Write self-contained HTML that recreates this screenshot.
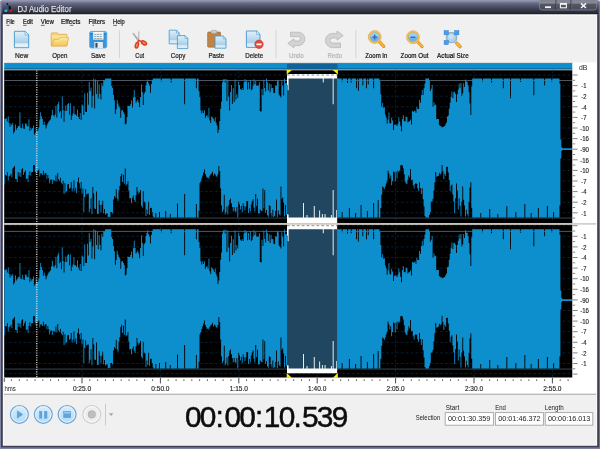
<!DOCTYPE html>
<html><head><meta charset="utf-8"><title>DJ Audio Editor</title>
<style>html,body{margin:0;padding:0;background:#f0f0f0;overflow:hidden}svg{display:block;will-change:transform}text{font-family:"Liberation Sans", sans-serif;paint-order:stroke;stroke-linejoin:round}</style>
</head><body>
<svg width="600" height="449" viewBox="0 0 600 449">
<defs>
<linearGradient id="tg" x1="0" y1="0" x2="0" y2="1">
<stop offset="0" stop-color="#9a9eb9"/><stop offset="0.1" stop-color="#8589a3"/><stop offset="0.2" stop-color="#6b6f88"/><stop offset="0.4" stop-color="#52566b"/><stop offset="0.6" stop-color="#3f4254"/><stop offset="0.85" stop-color="#2a2c39"/><stop offset="0.96" stop-color="#1c1d26"/><stop offset="1" stop-color="#101016"/>
</linearGradient>
<linearGradient id="docg" x1="0" y1="0" x2="0" y2="1"><stop offset="0" stop-color="#e2f0f9"/><stop offset="0.72" stop-color="#a6cfea"/><stop offset="0.76" stop-color="#d2e8f5"/><stop offset="1" stop-color="#e2f1fa"/></linearGradient>
<linearGradient id="capg" x1="0" y1="0" x2="0" y2="1"><stop offset="0" stop-color="#7d7f8d"/><stop offset="0.3" stop-color="#8a8c98"/><stop offset="0.42" stop-color="#555764"/><stop offset="1" stop-color="#474957"/></linearGradient>
<linearGradient id="btng" x1="0" y1="0" x2="0" y2="1"><stop offset="0" stop-color="#d9edfb"/><stop offset="1" stop-color="#b5daf5"/></linearGradient>
<linearGradient id="fold" x1="0" y1="0" x2="0" y2="1"><stop offset="0" stop-color="#fce695"/><stop offset="1" stop-color="#f5c659"/></linearGradient>
<clipPath id="selclip"><rect x="287.0" y="73.9" width="50.4" height="299.4"/></clipPath>
<clipPath id="waveclip"><rect x="4.2" y="70" width="568.3" height="308"/></clipPath>
</defs>
<rect x="0" y="0" width="600" height="449" fill="#f0f0f0"/>
<rect x="0" y="0" width="600" height="14.6" fill="url(#tg)"/>
<path d="M0 0H2.2A2.2 2.2 0 0 0 0 2.2Z" fill="#fff"/>
<path d="M600 0H597.8A2.2 2.2 0 0 1 600 2.2Z" fill="#fff"/>
<g><rect x="6.5" y="3" width="1.5" height="8" fill="#175a9c"/><path d="M6.8 3L8 3.2L8.4 5.2L7 4.6Z" fill="#0c0c10"/><ellipse cx="5.9" cy="10.7" rx="1.5" ry="1.3" fill="#30b2f4"/><path d="M8.6 5.6L10.6 6.2L10.8 10L9 10.2Z" fill="#0a0a0e"/><path d="M9.2 9.4L12.9 9L12 11.4L9.4 12Z" fill="#c8141e"/></g>
<text x="17.6" y="11.5" font-size="8.9" fill="#e4e5ee" stroke="#e4e5ee" stroke-width="0.25" style="filter:drop-shadow(0.5px 0.5px 0 #08080c)" textLength="53.9" lengthAdjust="spacingAndGlyphs">DJ Audio Editor</text>
<path d="M539.5 0V7.5A2.5 2.5 0 0 0 542 10H594A2.5 2.5 0 0 0 596.5 7.5V0Z" fill="url(#capg)" stroke="#8a8c9a" stroke-width="0.7"/>
<path d="M556 0V10M571 0V10" stroke="#2a2b36" stroke-width="0.8"/>
<path d="M556.8 0V9.6M571.8 0V9.6" stroke="#80838f" stroke-width="0.5"/>
<rect x="545" y="6.3" width="6" height="1.8" fill="#f4f4f6"/>
<rect x="560.4" y="3.6" width="6" height="4.2" fill="none" stroke="#f4f4f6" stroke-width="1.1"/><rect x="560" y="3.2" width="6.8" height="1.6" fill="#f4f4f6"/>
<path d="M581 3.4L586 8M586 3.4L581 8" stroke="#f4f4f6" stroke-width="1.5"/>
<rect x="3.6" y="14.6" width="593" height="12" fill="#f0f0f0"/>
<rect x="3.6" y="14.6" width="593" height="1.2" fill="#fbfbfb"/>
<text x="6.3" y="24" font-size="7.6" fill="#111" stroke="#111" stroke-width="0.22" textLength="8.4" lengthAdjust="spacingAndGlyphs">File</text>
<text x="23.0" y="24" font-size="7.6" fill="#111" stroke="#111" stroke-width="0.22" textLength="9.8" lengthAdjust="spacingAndGlyphs">Edit</text>
<text x="40.8" y="24" font-size="7.6" fill="#111" stroke="#111" stroke-width="0.22" textLength="13.0" lengthAdjust="spacingAndGlyphs">View</text>
<text x="61.0" y="24" font-size="7.6" fill="#111" stroke="#111" stroke-width="0.22" textLength="19.6" lengthAdjust="spacingAndGlyphs">Effects</text>
<text x="88.6" y="24" font-size="7.6" fill="#111" stroke="#111" stroke-width="0.22" textLength="16.4" lengthAdjust="spacingAndGlyphs">Filters</text>
<text x="113.0" y="24" font-size="7.6" fill="#111" stroke="#111" stroke-width="0.22" textLength="11.8" lengthAdjust="spacingAndGlyphs">Help</text>
<rect x="6.4" y="24.9" width="3.0" height="0.7" fill="#333"/>
<rect x="23.1" y="24.9" width="3.5" height="0.7" fill="#333"/>
<rect x="40.9" y="24.9" width="3.7" height="0.7" fill="#333"/>
<rect x="70.2" y="24.9" width="3.0" height="0.7" fill="#333"/>
<rect x="92.6" y="24.9" width="1.4" height="0.7" fill="#333"/>
<rect x="113.1" y="24.9" width="3.9" height="0.7" fill="#333"/>
<rect x="3.6" y="26.6" width="593" height="35.4" fill="#f0f0f0"/>
<rect x="3.6" y="61.8" width="593" height="1" fill="#fbfbfb"/>
<rect x="119.1" y="30.3" width="0.9" height="27.6" fill="#d2d2d2"/>
<rect x="275.6" y="30.3" width="0.9" height="27.6" fill="#d2d2d2"/>
<rect x="355.4" y="30.3" width="0.9" height="27.6" fill="#d2d2d2"/>
<text x="15.0" y="57.8" font-size="7.4" fill="#1a1a1a" stroke="#1a1a1a" stroke-width="0.22" textLength="13.2" lengthAdjust="spacingAndGlyphs">New</text>
<text x="52.3" y="57.8" font-size="7.4" fill="#1a1a1a" stroke="#1a1a1a" stroke-width="0.22" textLength="15.1" lengthAdjust="spacingAndGlyphs">Open</text>
<text x="91.0" y="57.8" font-size="7.4" fill="#1a1a1a" stroke="#1a1a1a" stroke-width="0.22" textLength="14.4" lengthAdjust="spacingAndGlyphs">Save</text>
<text x="135.3" y="57.8" font-size="7.4" fill="#1a1a1a" stroke="#1a1a1a" stroke-width="0.22" textLength="8.8" lengthAdjust="spacingAndGlyphs">Cut</text>
<text x="170.7" y="57.8" font-size="7.4" fill="#1a1a1a" stroke="#1a1a1a" stroke-width="0.22" textLength="14.7" lengthAdjust="spacingAndGlyphs">Copy</text>
<text x="208.4" y="57.8" font-size="7.4" fill="#1a1a1a" stroke="#1a1a1a" stroke-width="0.22" textLength="15.7" lengthAdjust="spacingAndGlyphs">Paste</text>
<text x="245.3" y="57.8" font-size="7.4" fill="#1a1a1a" stroke="#1a1a1a" stroke-width="0.22" textLength="17.8" lengthAdjust="spacingAndGlyphs">Delete</text>
<text x="289.0" y="57.8" font-size="7.4" fill="#b4b4b4" stroke="#b4b4b4" stroke-width="0.22" textLength="14.7" lengthAdjust="spacingAndGlyphs">Undo</text>
<text x="327.4" y="57.8" font-size="7.4" fill="#b4b4b4" stroke="#b4b4b4" stroke-width="0.22" textLength="14.7" lengthAdjust="spacingAndGlyphs">Redo</text>
<text x="365.3" y="57.8" font-size="7.4" fill="#111" stroke="#111" stroke-width="0.22" textLength="22.1" lengthAdjust="spacingAndGlyphs">Zoom In</text>
<text x="400.6" y="57.8" font-size="7.4" fill="#111" stroke="#111" stroke-width="0.22" textLength="27.8" lengthAdjust="spacingAndGlyphs">Zoom Out</text>
<text x="437.0" y="57.8" font-size="7.4" fill="#111" stroke="#111" stroke-width="0.22" textLength="31.8" lengthAdjust="spacingAndGlyphs">Actual Size</text>
<path d="M14.4 31.3H25.1L28.7 34.9V47.7H14.4Z" fill="url(#docg)" stroke="#4496cd" stroke-width="0.9" stroke-linejoin="round"/><path d="M25.1 31.3V34.9H28.7Z" fill="#fff" stroke="#4496cd" stroke-width="0.6" stroke-linejoin="round"/>
<rect x="15.2" y="43.6" width="12.6" height="3.4" fill="#e3f1fa" opacity="0.9"/>
<path d="M51.2 33.7Q51.2 32.9 52 32.9H57.3L58.6 34.3H66.2Q67 34.3 67 35.1V45.8H51.2Z" fill="#f8d874" stroke="#dca43a" stroke-width="0.7" stroke-linejoin="round"/>
<path d="M52 35.4H66.2V38H52Z" fill="#fbe7a2" opacity="0.8"/>
<path d="M51.5 46L54 39.6H58.7L59.8 37.8H68.7L66.6 46Z" fill="url(#fold)" stroke="#dfa83c" stroke-width="0.7" stroke-linejoin="round"/>
<path d="M54.6 40.3H59.1L60.2 38.5H67.8" stroke="#fdf1b6" stroke-width="0.6" fill="none"/>
<rect x="89.6" y="31.4" width="17.2" height="16.6" rx="1.7" fill="#3494de" stroke="#5aaae6" stroke-width="0.8"/>
<rect x="90.3" y="32" width="15.8" height="1.2" rx="0.6" fill="#7cc0f0" opacity="0.8"/>
<rect x="93.2" y="32" width="10.3" height="7.6" fill="#f7fafc"/>
<path d="M94.2 34.3H102.4M94.2 36.4H102.4M94.2 38.4H102.4" stroke="#6f8797" stroke-width="0.8" stroke-dasharray="2.2 0.5"/>
<rect x="90.8" y="33" width="1" height="1.6" fill="#1d5fa0"/><rect x="104.6" y="33" width="1" height="1.6" fill="#1d5fa0"/>
<rect x="94.3" y="42" width="8.6" height="6.2" fill="#e6ebef"/>
<rect x="95.4" y="42.9" width="2.1" height="4.7" fill="#33475a"/>
<path d="M132.3 33.2L133.5 32.7L139.8 40.4L138 41.6Z" fill="#a4a8ad"/>
<path d="M138.3 30.5L139.5 32.2L139.4 41L137.5 40.9Z" fill="#bfc3c7"/>
<path d="M138.6 40.5L137.4 42.8M138.9 40.5L141.8 41.6" stroke="#dc3f1b" stroke-width="1.5" stroke-linecap="round"/>
<ellipse cx="136.9" cy="45.2" rx="1.5" ry="2.8" fill="#ee9278" stroke="#dc3f1b" stroke-width="1.5" transform="rotate(14 136.9 45.2)"/>
<ellipse cx="144" cy="42.9" rx="2.8" ry="1.6" fill="#ee9278" stroke="#dc3f1b" stroke-width="1.5" transform="rotate(32 144 42.9)"/>
<circle cx="138.5" cy="40.3" r="0.7" fill="#e4502c"/>
<path d="M169.2 30.2H176.4L179.2 33.0V43.8H169.2Z" fill="url(#docg)" stroke="#4496cd" stroke-width="0.8" stroke-linejoin="round"/><path d="M176.4 30.2V33.0H179.2Z" fill="#fff" stroke="#4496cd" stroke-width="0.6" stroke-linejoin="round"/>
<path d="M177.4 35.6H185.0L187.8 38.4V48.6H177.4Z" fill="url(#docg)" stroke="#4496cd" stroke-width="0.8" stroke-linejoin="round"/><path d="M185.0 35.6V38.4H187.8Z" fill="#fff" stroke="#4496cd" stroke-width="0.6" stroke-linejoin="round"/>
<rect x="207.6" y="32" width="13" height="15.2" rx="1" fill="#bd8444" stroke="#9c6a33" stroke-width="0.6"/>
<rect x="211.2" y="30.4" width="5.6" height="3" rx="0.8" fill="#c9cdd2" stroke="#8d9298" stroke-width="0.5"/>
<path d="M215.0 36.0H223.2L226.0 38.8V48.2H215.0Z" fill="url(#docg)" stroke="#4496cd" stroke-width="0.8" stroke-linejoin="round"/><path d="M223.2 36.0V38.8H226.0Z" fill="#fff" stroke="#4496cd" stroke-width="0.6" stroke-linejoin="round"/>
<path d="M246.4 31.0H256.6L260.0 34.4V47.4H246.4Z" fill="url(#docg)" stroke="#4496cd" stroke-width="0.9" stroke-linejoin="round"/><path d="M256.6 31.0V34.4H260.0Z" fill="#fff" stroke="#4496cd" stroke-width="0.6" stroke-linejoin="round"/>
<circle cx="259" cy="44.3" r="4.2" fill="#e8473c" stroke="#c2362c" stroke-width="0.6"/>
<rect x="256.4" y="43.4" width="5.2" height="1.8" rx="0.4" fill="#fff"/>
<path d="M290.5 32.2H298.2A6.7 6.7 0 0 1 298.2 45.6H294V47.8L287.8 43.3L294 38.8V41H298.2A2.2 2.2 0 0 0 298.2 36.6H290.5Z" fill="#d3d3d3" stroke="#b2b2b2" stroke-width="0.7" stroke-linejoin="round"/>
<path d="M340.5 47.6H332.5A7.1 7.1 0 0 1 332.5 33.4H337V31L343.2 35.6L337 40.2V38H332.5A2.5 2.5 0 0 0 332.5 43H340.5Z" fill="#d3d3d3" stroke="#b2b2b2" stroke-width="0.7" stroke-linejoin="round"/>
<path d="M379.5 41.8L383.7 46.3" stroke="#d98a1c" stroke-width="3.2" stroke-linecap="round"/><path d="M379.5 41.8L383.7 46.3" stroke="#f8b23c" stroke-width="2" stroke-linecap="round"/><circle cx="374.7" cy="37.0" r="5.6" fill="#68b4ed" stroke="#f7c055" stroke-width="1.7"/><circle cx="374.7" cy="37.0" r="6.5" fill="none" stroke="#dc9a30" stroke-width="0.5"/><circle cx="374.7" cy="37.0" r="4.7" fill="none" stroke="#e6a23a" stroke-width="0.4"/><path d="M370.3 37.0A4.4 4.4 0 0 1 379.1 37.0Z" fill="#a4d4f7" opacity="0.85"/><rect x="372.3" y="36.3" width="4.8" height="1.4" fill="#2670bd"/><rect x="374.0" y="34.6" width="1.4" height="4.8" fill="#2670bd"/>
<path d="M417.8 42.0L422.0 46.5" stroke="#d98a1c" stroke-width="3.2" stroke-linecap="round"/><path d="M417.8 42.0L422.0 46.5" stroke="#f8b23c" stroke-width="2" stroke-linecap="round"/><circle cx="413.0" cy="37.2" r="5.6" fill="#68b4ed" stroke="#f7c055" stroke-width="1.7"/><circle cx="413.0" cy="37.2" r="6.5" fill="none" stroke="#dc9a30" stroke-width="0.5"/><circle cx="413.0" cy="37.2" r="4.7" fill="none" stroke="#e6a23a" stroke-width="0.4"/><path d="M408.6 37.2A4.4 4.4 0 0 1 417.4 37.2Z" fill="#a4d4f7" opacity="0.85"/><rect x="410.6" y="36.5" width="4.8" height="1.4" fill="#2670bd"/>
<rect x="446.2" y="32.7" width="10.6" height="10" fill="none" stroke="#7fb9ec" stroke-width="0.8"/>
<path d="M457 43.6L460 46.6" stroke="#d78a1a" stroke-width="3.6" stroke-linecap="round"/><path d="M457 43.6L460 46.6" stroke="#f8ad2e" stroke-width="2.4" stroke-linecap="round"/><path d="M457.4 43.2L460.2 46" stroke="#fcd68c" stroke-width="0.7" stroke-linecap="round"/>
<circle cx="451.6" cy="37.6" r="4.9" fill="#a9d5f4" stroke="#a3abb3" stroke-width="1.2"/>
<circle cx="450.8" cy="36.6" r="2.6" fill="#cbe6f9" opacity="0.8"/>
<rect x="444.1" y="30.6" width="4.2" height="4.2" fill="#4a9de8" stroke="#2f80d0" stroke-width="0.5"/>
<rect x="454.7" y="30.6" width="4.2" height="4.2" fill="#4a9de8" stroke="#2f80d0" stroke-width="0.5"/>
<rect x="444.1" y="40.5" width="4.2" height="4.2" fill="#4a9de8" stroke="#2f80d0" stroke-width="0.5"/>
<rect x="4.2" y="62.8" width="568.3" height="1.2" fill="#7d766c"/>
<rect x="4.2" y="63.7" width="568.3" height="5.4" fill="#0e8fcd"/>
<rect x="287.0" y="63.8" width="50.4" height="5.4" fill="#12629a"/>
<rect x="4.2" y="68.4" width="568.3" height="0.9" fill="#0b5d93"/>
<rect x="4.2" y="69.1" width="568.3" height="1.3" fill="#8f887c"/>
<rect x="4.2" y="70.3" width="568.3" height="307.4" fill="#000"/>
<path d="M4 75.0H572.5M4 225.7H572.5M4 85.6H572.5M4 236.3H572.5M4 96.2H572.5M4 246.9H572.5M4 106.8H572.5M4 257.5H572.5M4 117.4H572.5M4 268.1H572.5M4 128.0H572.5M4 278.7H572.5M4 138.6H572.5M4 289.3H572.5M4 149.2H572.5M4 299.9H572.5M4 159.8H572.5M4 310.5H572.5M4 170.4H572.5M4 321.1H572.5M4 181.0H572.5M4 331.7H572.5M4 191.6H572.5M4 342.3H572.5M4 202.2H572.5M4 352.9H572.5M4 212.8H572.5M4 363.5H572.5M4 373.6H572.5" stroke="#07213a" stroke-width="0.9" stroke-dasharray="2.8 2.1" fill="none"/>
<path d="M82.0 70.5V377.5M160.4 70.5V377.5M238.8 70.5V377.5M317.2 70.5V377.5M395.6 70.5V377.5M474.0 70.5V377.5M552.4 70.5V377.5" stroke="#07213a" stroke-width="0.9" stroke-dasharray="2.8 2.1" fill="none"/>
<rect x="4" y="80.0" width="568.5" height="0.9" fill="#56616f"/>
<rect x="4" y="217.6" width="568.5" height="0.9" fill="#3d4d5d"/>
<rect x="4" y="230.9" width="568.5" height="0.9" fill="#56616f"/>
<rect x="4" y="368.6" width="568.5" height="0.9" fill="#3d4d5d"/>
<rect x="4.2" y="223.1" width="568.3" height="1.6" fill="#c9c5bd"/>
<g clip-path="url(#waveclip)">
<path d="M4.20 149.2V118.7H5.10V118.8H6.00V118.4H6.90V121.5H7.80V116.4H8.70V123.2H9.60V126.8H10.50V123.5H11.40V125.2H12.30V123.1H13.20V133.4H14.10V131.5H15.00V124.4H15.90V129.7H16.80V128.1H17.70V126.3H18.60V126.1H19.50V112.2H20.40V127.8H21.30V128.3H22.20V123.8H23.10V128.4H24.00V129.0H24.90V123.6H25.80V123.7H26.70V126.1H27.60V126.4H28.50V119.2H29.40V131.1H30.30V127.7H31.20V129.5H32.10V128.1H33.00V125.5H33.90V134.7H34.80V133.0H35.70V128.1H36.60V131.5H37.50V130.6H38.40V127.6H39.30V119.4H40.20V112.2H41.10V116.2H42.00V119.1H42.90V124.9H43.80V121.7H44.70V124.7H45.60V128.4H46.50V125.3H47.40V123.3H48.30V121.6H49.20V120.6H50.10V119.3H51.00V115.5H51.90V109.9H52.80V115.0H53.70V116.4H54.60V114.4H55.50V105.8H56.40V117.4H57.30V104.3H58.20V101.8H59.10V112.4H60.00V111.0H60.90V118.3H61.80V96.3H62.70V110.1H63.60V121.7H64.50V110.8H65.40V105.6H66.30V111.1H67.20V104.3H68.10V103.3H69.00V114.4H69.90V103.3H70.80V120.1H71.70V115.8H72.60V113.6H73.50V106.3H74.40V114.3H75.30V114.4H76.20V115.8H77.10V109.4H78.00V116.9H78.90V119.0H79.80V112.9H80.70V120.1H81.60V104.6H82.50V105.7H83.40V115.1H84.30V93.3H85.20V111.8H86.10V111.9H87.00V92.8H87.90V104.7H88.80V82.1H89.70V90.9H90.60V87.8H91.50V107.5H92.40V95.7H93.30V78.4H94.20V108.4H95.10V79.4H96.00V93.9H96.90V80.4H97.80V98.4H98.70V84.4H99.60V93.8H100.50V99.4H101.40V82.9H102.30V86.2H103.20V80.1H104.10V80.6H105.00V78.7H105.90V78.4H106.80V78.4H107.70V78.4H108.60V78.4H109.50V78.4H110.40V78.4H111.30V86.0H112.20V88.0H113.10V95.1H114.00V100.3H114.90V113.9H115.80V109.2H116.70V99.9H117.60V103.6H118.50V106.2H119.40V107.7H120.30V117.7H121.20V110.5H122.10V110.1H123.00V112.2H123.90V114.0H124.80V124.5H125.70V123.6H126.60V117.3H127.50V105.5H128.40V106.1H129.30V106.1H130.20V104.2H131.10V100.6H132.00V107.4H132.90V97.4H133.80V89.9H134.70V97.1H135.60V102.7H136.50V101.1H137.40V99.6H138.30V102.6H139.20V107.2H140.10V97.0H141.00V84.4H141.90V92.1H142.80V105.1H143.70V93.4H144.60V91.8H145.50V85.2H146.40V82.1H147.30V79.4H148.20V83.3H149.10V85.6H150.00V92.7H150.90V84.1H151.80V80.2H152.70V78.4H153.60V78.4H154.50V78.4H155.40V78.4H156.30V78.4H157.20V78.4H158.10V78.4H159.00V78.4H159.90V78.4H160.80V81.4H161.70V78.4H162.60V78.4H163.50V78.4H164.40V78.4H165.30V78.4H166.20V78.4H167.10V78.4H168.00V78.4H168.90V78.4H169.80V78.4H170.70V82.4H171.60V78.4H172.50V78.4H173.40V78.4H174.30V78.4H175.20V78.4H176.10V78.4H177.00V78.4H177.90V78.4H178.80V78.4H179.70V78.4H180.60V78.4H181.50V78.4H182.40V78.4H183.30V78.4H184.20V104.3H185.10V78.4H186.00V78.4H186.90V78.4H187.80V78.4H188.70V78.4H189.60V78.4H190.50V78.4H191.40V78.4H192.30V78.4H193.20V78.4H194.10V78.4H195.00V78.4H195.90V88.3H196.80V78.4H197.70V78.4H198.60V91.2H199.50V96.9H200.40V110.3H201.30V113.5H202.20V110.5H203.10V113.0H204.00V110.3H204.90V118.0H205.80V116.1H206.70V115.1H207.60V117.6H208.50V107.7H209.40V120.3H210.30V122.9H211.20V116.5H212.10V117.5H213.00V118.7H213.90V121.2H214.80V117.5H215.70V122.8H216.60V125.6H217.50V133.0H218.40V129.7H219.30V121.0H220.20V108.8H221.10V101.5H222.00V82.6H222.90V79.6H223.80V78.9H224.70V82.5H225.60V78.9H226.50V101.1H227.40V79.8H228.30V96.7H229.20V110.4H230.10V92.1H231.00V84.9H231.90V104.0H232.80V88.3H233.70V102.1H234.60V79.5H235.50V99.5H236.40V94.0H237.30V97.7H238.20V81.8H239.10V84.9H240.00V88.9H240.90V90.0H241.80V88.1H242.70V90.0H243.60V82.3H244.50V79.1H245.40V81.7H246.30V80.4H247.20V89.4H248.10V82.1H249.00V88.8H249.90V80.2H250.80V90.3H251.70V89.2H252.60V85.5H253.50V79.3H254.40V84.2H255.30V81.1H256.20V85.8H257.10V85.5H258.00V85.6H258.90V82.3H259.80V111.2H260.70V111.5H261.60V88.9H262.50V95.2H263.40V79.7H264.30V87.9H265.20V91.5H266.10V78.6H267.00V82.2H267.90V90.2H268.80V83.4H269.70V92.2H270.60V84.2H271.50V88.3H272.40V88.1H273.30V92.9H274.20V93.1H275.10V85.7H276.00V85.5H276.90V79.8H277.80V81.3H278.70V94.5H279.60V96.2H280.50V97.6H281.40V81.3H282.30V85.5H283.20V95.4H284.10V78.6H285.00V83.3H285.90V83.0H286.80V84.7H287.70V90.3H288.60V78.4H289.50V78.4H290.40V78.4H291.30V78.4H292.20V78.4H293.10V78.4H294.00V78.4H294.90V78.4H295.80V78.4H296.70V78.4H297.60V78.4H298.50V78.4H299.40V78.4H300.30V78.4H301.20V78.4H302.10V78.4H303.00V78.4H303.90V78.4H304.80V78.4H305.70V78.4H306.60V78.4H307.50V78.4H308.40V78.4H309.30V78.4H310.20V78.4H311.10V78.4H312.00V78.4H312.90V78.4H313.80V78.4H314.70V78.4H315.60V78.4H316.50V78.4H317.40V78.4H318.30V78.4H319.20V78.4H320.10V78.4H321.00V78.4H321.90V78.4H322.80V82.4H323.70V78.4H324.60V78.4H325.50V78.4H326.40V78.4H327.30V78.4H328.20V78.4H329.10V78.4H330.00V78.4H330.90V78.4H331.80V78.4H332.70V104.3H333.60V78.4H334.50V78.4H335.40V78.4H336.30V78.4H337.20V78.4H338.10V78.4H339.00V78.4H339.90V78.4H340.80V78.4H341.70V81.4H342.60V78.4H343.50V78.4H344.40V78.4H345.30V78.4H346.20V78.4H347.10V82.9H348.00V78.4H348.90V78.4H349.80V78.4H350.70V82.4H351.60V78.4H352.50V78.4H353.40V78.4H354.30V78.4H355.20V78.4H356.10V88.3H357.00V78.4H357.90V90.8H358.80V78.4H359.70V78.4H360.60V78.4H361.50V78.4H362.40V85.4H363.30V78.4H364.20V78.4H365.10V78.4H366.00V88.3H366.90V78.4H367.80V84.4H368.70V78.4H369.60V78.4H370.50V78.4H371.40V78.4H372.30V78.4H373.20V88.3H374.10V78.4H375.00V78.4H375.90V78.4H376.80V78.4H377.70V78.4H378.60V78.4H379.50V81.2H380.40V94.2H381.30V106.7H382.20V103.1H383.10V107.8H384.00V107.3H384.90V114.5H385.80V117.4H386.70V123.7H387.60V119.4H388.50V112.4H389.40V122.9H390.30V123.5H391.20V118.0H392.10V120.4H393.00V130.1H393.90V125.1H394.80V124.4H395.70V124.4H396.60V126.0H397.50V123.7H398.40V117.5H399.30V121.4H400.20V125.8H401.10V131.3H402.00V119.0H402.90V115.3H403.80V121.1H404.70V121.5H405.60V116.6H406.50V117.3H407.40V122.5H408.30V121.4H409.20V121.3H410.10V119.4H411.00V124.6H411.90V110.8H412.80V111.7H413.70V111.2H414.60V110.4H415.50V112.8H416.40V107.1H417.30V109.1H418.20V109.0H419.10V100.1H420.00V102.8H420.90V95.3H421.80V89.9H422.70V94.9H423.60V88.2H424.50V83.5H425.40V78.6H426.30V78.4H427.20V78.4H428.10V78.4H429.00V80.7H429.90V90.9H430.80V88.8H431.70V85.0H432.60V106.8H433.50V102.3H434.40V105.2H435.30V104.5H436.20V119.3H437.10V119.1H438.00V118.9H438.90V124.9H439.80V126.3H440.70V125.9H441.60V127.5H442.50V126.9H443.40V126.6H444.30V126.0H445.20V124.3H446.10V122.5H447.00V116.4H447.90V115.6H448.80V108.8H449.70V102.8H450.60V97.0H451.50V91.5H452.40V98.0H453.30V92.3H454.20V91.8H455.10V93.9H456.00V102.1H456.90V94.2H457.80V89.8H458.70V83.7H459.60V87.8H460.50V83.1H461.40V95.7H462.30V93.3H463.20V83.2H464.10V87.0H465.00V79.4H465.90V81.5H466.80V81.9H467.70V85.2H468.60V92.2H469.50V103.4H470.40V115.0H471.30V86.4H472.20V78.4H473.10V78.4H474.00V78.4H474.90V78.4H475.80V78.4H476.70V78.4H477.60V78.4H478.50V78.4H479.40V78.4H480.30V78.4H481.20V78.4H482.10V81.4H483.00V78.4H483.90V78.4H484.80V78.4H485.70V78.4H486.60V78.4H487.50V78.4H488.40V78.4H489.30V78.4H490.20V78.4H491.10V82.4H492.00V78.4H492.90V78.4H493.80V78.4H494.70V78.4H495.60V78.4H496.50V78.4H497.40V78.4H498.30V78.4H499.20V78.4H500.10V78.4H501.00V78.4H501.90V78.4H502.80V88.3H503.70V78.4H504.60V78.4H505.50V78.4H506.40V78.4H507.30V78.4H508.20V78.4H509.10V78.4H510.00V98.3H510.90V78.4H511.80V78.4H512.70V78.4H513.60V78.4H514.50V78.4H515.40V78.4H516.30V78.4H517.20V78.4H518.10V78.4H519.00V78.4H519.90V81.9H520.80V78.4H521.70V78.4H522.60V78.4H523.50V78.4H524.40V78.4H525.30V78.4H526.20V78.4H527.10V78.4H528.00V78.4H528.90V78.4H529.80V78.4H530.70V78.4H531.60V78.4H532.50V78.4H533.40V95.3H534.30V78.4H535.20V78.4H536.10V78.4H537.00V78.4H537.90V78.4H538.80V78.4H539.70V78.4H540.60V78.4H541.50V78.4H542.40V78.4H543.30V78.4H544.20V85.4H545.10V78.4H546.00V78.4H546.90V78.4H547.80V78.4H548.70V78.4H549.60V78.4H550.50V78.4H551.40V81.4H552.30V78.4H553.20V78.4H554.10V78.4H555.00V78.4H555.90V78.4H556.80V78.4H557.70V78.4H558.60V78.4H559.50V83.5H560.40V139.6H561.30V147.2H562.20V148.3H563.10V148.3H564.00V148.3H564.90V148.3H565.80V148.3H566.70V148.3H567.60V148.3H568.50V148.3H569.40V148.3H570.30V148.3H571.20V148.3H572.10V148.3H572.50V149.2V149.9H572.10V149.9H571.20V149.9H570.30V149.9H569.40V149.9H568.50V149.9H567.60V149.9H566.70V149.9H565.80V149.9H564.90V149.9H564.00V149.9H563.10V149.9H562.20V150.9H561.30V158.6H560.40V205.6H559.50V217.4H558.60V217.4H557.70V217.4H556.80V217.4H555.90V217.4H555.00V217.4H554.10V212.0H553.20V217.4H552.30V217.4H551.40V217.4H550.50V217.4H549.60V217.4H548.70V217.4H547.80V206.0H546.90V217.4H546.00V217.4H545.10V217.4H544.20V217.4H543.30V217.4H542.40V217.4H541.50V217.4H540.60V217.4H539.70V217.4H538.80V208.0H537.90V217.4H537.00V217.4H536.10V217.4H535.20V217.4H534.30V217.4H533.40V217.4H532.50V217.4H531.60V213.0H530.70V217.4H529.80V217.4H528.90V217.4H528.00V217.4H527.10V217.4H526.20V217.4H525.30V204.0H524.40V217.4H523.50V217.4H522.60V217.4H521.70V217.4H520.80V217.4H519.90V217.4H519.00V217.4H518.10V217.4H517.20V217.4H516.30V212.0H515.40V217.4H514.50V217.4H513.60V217.4H512.70V217.4H511.80V217.4H510.90V217.4H510.00V217.4H509.10V217.4H508.20V217.4H507.30V206.0H506.40V217.4H505.50V217.4H504.60V217.4H503.70V217.4H502.80V217.4H501.90V217.4H501.00V217.4H500.10V217.4H499.20V217.4H498.30V214.0H497.40V217.4H496.50V217.4H495.60V217.4H494.70V217.4H493.80V217.4H492.90V217.4H492.00V217.4H491.10V217.4H490.20V209.0H489.30V217.4H488.40V217.4H487.50V217.4H486.60V217.4H485.70V217.4H484.80V217.4H483.90V217.4H483.00V217.4H482.10V217.4H481.20V213.0H480.30V217.4H479.40V217.4H478.50V217.4H477.60V217.4H476.70V217.4H475.80V217.4H474.90V217.4H474.00V217.4H473.10V217.4H472.20V207.8H471.30V182.3H470.40V187.5H469.50V201.7H468.60V216.4H467.70V214.1H466.80V209.7H465.90V216.5H465.00V205.4H464.10V199.8H463.20V186.4H462.30V201.5H461.40V216.5H460.50V205.7H459.60V198.4H458.70V209.5H457.80V190.5H456.90V183.4H456.00V198.2H455.10V213.2H454.20V201.6H453.30V194.4H452.40V184.4H451.50V185.8H450.60V190.9H449.70V179.9H448.80V172.5H447.90V166.7H447.00V167.1H446.10V175.8H445.20V173.8H444.30V179.1H443.40V171.3H442.50V164.9H441.60V173.2H440.70V174.4H439.80V172.8H438.90V175.8H438.00V176.3H437.10V176.7H436.20V172.0H435.30V182.2H434.40V190.5H433.50V198.8H432.60V201.2H431.70V201.8H430.80V212.2H429.90V215.1H429.00V217.4H428.10V217.4H427.20V217.4H426.30V217.4H425.40V215.9H424.50V206.4H423.60V199.2H422.70V188.3H421.80V193.9H420.90V188.1H420.00V182.2H419.10V190.7H418.20V188.5H417.30V184.0H416.40V183.1H415.50V183.9H414.60V188.6H413.70V185.3H412.80V179.8H411.90V179.9H411.00V168.9H410.10V177.5H409.20V175.4H408.30V179.7H407.40V184.1H406.50V183.5H405.60V181.6H404.70V174.2H403.80V168.5H402.90V165.6H402.00V165.1H401.10V165.2H400.20V170.6H399.30V172.2H398.40V170.6H397.50V178.5H396.60V171.7H395.70V181.5H394.80V172.3H393.90V171.6H393.00V181.0H392.10V185.3H391.20V175.4H390.30V178.5H389.40V173.2H388.50V170.4H387.60V180.6H386.70V183.6H385.80V186.4H384.90V188.8H384.00V187.4H383.10V186.6H382.20V194.8H381.30V208.1H380.40V217.4H379.50V217.4H378.60V200.0H377.70V217.4H376.80V217.4H375.90V217.4H375.00V217.4H374.10V203.0H373.20V217.4H372.30V217.4H371.40V217.4H370.50V217.4H369.60V217.4H368.70V217.4H367.80V211.0H366.90V217.4H366.00V217.4H365.10V217.4H364.20V217.4H363.30V217.4H362.40V217.4H361.50V205.0H360.60V217.4H359.70V217.4H358.80V217.4H357.90V217.4H357.00V217.4H356.10V213.0H355.20V217.4H354.30V217.4H353.40V217.4H352.50V217.4H351.60V217.4H350.70V217.4H349.80V208.0H348.90V217.4H348.00V217.4H347.10V217.4H346.20V217.4H345.30V217.4H344.40V217.4H343.50V217.4H342.60V212.0H341.70V217.4H340.80V217.4H339.90V217.4H339.00V217.4H338.10V217.4H337.20V210.0H336.30V217.4H335.40V217.4H334.50V217.4H333.60V190.0H332.70V217.4H331.80V215.0H330.90V217.4H330.00V217.4H329.10V217.4H328.20V217.4H327.30V217.4H326.40V217.4H325.50V214.0H324.60V217.4H323.70V217.4H322.80V214.0H321.90V217.4H321.00V217.4H320.10V210.4H319.20V217.4H318.30V217.4H317.40V217.4H316.50V217.4H315.60V217.4H314.70V206.0H313.80V217.4H312.90V217.4H312.00V217.4H311.10V217.4H310.20V217.4H309.30V217.4H308.40V217.4H307.50V215.0H306.60V217.4H305.70V217.4H304.80V217.4H303.90V203.0H303.00V217.4H302.10V217.4H301.20V217.4H300.30V217.4H299.40V217.4H298.50V217.4H297.60V217.4H296.70V217.4H295.80V217.4H294.90V217.4H294.00V217.4H293.10V217.4H292.20V217.4H291.30V217.4H290.40V217.4H289.50V217.4H288.60V214.6H287.70V214.3H286.80V214.9H285.90V205.0H285.00V216.6H284.10V202.4H283.20V197.3H282.30V198.9H281.40V186.5H280.50V215.4H279.60V214.2H278.70V210.4H277.80V217.3H276.90V199.4H276.00V211.0H275.10V216.1H274.20V217.1H273.30V209.7H272.40V216.5H271.50V213.3H270.60V206.1H269.70V205.3H268.80V216.7H267.90V215.3H267.00V210.1H266.10V212.8H265.20V190.0H264.30V208.3H263.40V188.4H262.50V211.2H261.60V210.8H260.70V209.6H259.80V213.3H258.90V213.4H258.00V198.8H257.10V206.0H256.20V194.0H255.30V211.4H254.40V207.4H253.50V199.3H252.60V201.5H251.70V204.4H250.80V211.4H249.90V208.2H249.00V213.1H248.10V201.2H247.20V201.0H246.30V206.4H245.40V210.6H244.50V206.1H243.60V203.2H242.70V212.2H241.80V206.0H240.90V209.6H240.00V204.2H239.10V201.7H238.20V217.3H237.30V207.1H236.40V212.1H235.50V211.0H234.60V207.0H233.70V211.6H232.80V207.0H231.90V203.2H231.00V198.6H230.10V199.9H229.20V205.2H228.30V214.6H227.40V206.4H226.50V212.1H225.60V214.3H224.70V194.7H223.80V209.7H222.90V211.9H222.00V205.4H221.10V188.4H220.20V171.3H219.30V166.1H218.40V174.2H217.50V176.7H216.60V176.3H215.70V174.5H214.80V173.5H213.90V175.7H213.00V171.7H212.10V173.6H211.20V174.2H210.30V175.7H209.40V178.8H208.50V177.3H207.60V178.0H206.70V176.4H205.80V174.0H204.90V169.6H204.00V172.4H203.10V175.4H202.20V178.2H201.30V181.3H200.40V183.2H199.50V210.7H198.60V217.4H197.70V217.4H196.80V204.0H195.90V217.4H195.00V217.4H194.10V217.4H193.20V217.4H192.30V217.4H191.40V217.4H190.50V217.4H189.60V217.4H188.70V217.4H187.80V217.4H186.90V217.4H186.00V217.4H185.10V194.0H184.20V217.4H183.30V217.4H182.40V217.4H181.50V217.4H180.60V217.4H179.70V217.4H178.80V217.4H177.90V203.4H177.00V217.4H176.10V217.4H175.20V217.4H174.30V217.4H173.40V217.4H172.50V217.4H171.60V217.4H170.70V214.0H169.80V217.4H168.90V217.4H168.00V217.4H167.10V217.4H166.20V211.0H165.30V217.4H164.40V217.4H163.50V217.4H162.60V217.4H161.70V217.4H160.80V217.4H159.90V212.0H159.00V217.4H158.10V217.4H157.20V217.4H156.30V213.0H155.40V217.4H154.50V217.4H153.60V216.6H152.70V211.9H151.80V207.7H150.90V208.1H150.00V215.1H149.10V201.8H148.20V214.0H147.30V209.4H146.40V216.0H145.50V202.4H144.60V201.4H143.70V190.9H142.80V207.4H141.90V205.8H141.00V190.0H140.10V192.3H139.20V193.8H138.30V191.3H137.40V187.0H136.50V195.3H135.60V202.1H134.70V199.8H133.80V195.4H132.90V197.7H132.00V203.2H131.10V198.0H130.20V198.5H129.30V190.5H128.40V181.0H127.50V184.3H126.60V185.4H125.70V168.6H124.80V183.8H123.90V174.7H123.00V182.1H122.10V173.8H121.20V176.2H120.30V185.9H119.40V190.6H118.50V200.8H117.60V198.6H116.70V189.2H115.80V197.4H114.90V196.0H114.00V199.4H113.10V213.4H112.20V212.0H111.30V212.1H110.40V217.0H109.50V216.8H108.60V216.9H107.70V213.5H106.80V213.5H105.90V214.6H105.00V208.9H104.10V213.3H103.20V200.7H102.30V204.7H101.40V212.6H100.50V205.1H99.60V200.3H98.70V213.7H97.80V214.1H96.90V191.5H96.00V209.0H95.10V208.6H94.20V193.5H93.30V186.9H92.40V214.2H91.50V198.2H90.60V208.7H89.70V211.9H88.80V193.6H87.90V193.8H87.00V194.5H86.10V189.3H85.20V197.0H84.30V211.9H83.40V188.6H82.50V193.4H81.60V182.0H80.70V188.4H79.80V183.3H78.90V177.6H78.00V181.9H77.10V193.1H76.20V187.7H75.30V190.8H74.40V180.3H73.50V188.5H72.60V191.4H71.70V181.9H70.80V187.9H69.90V188.8H69.00V184.1H68.10V184.3H67.20V191.3H66.30V192.6H65.40V183.2H64.50V193.9H63.60V180.8H62.70V184.2H61.80V182.8H60.90V177.7H60.00V180.8H59.10V179.3H58.20V173.1H57.30V181.6H56.40V175.6H55.50V181.0H54.60V180.3H53.70V179.7H52.80V183.9H51.90V179.5H51.00V179.7H50.10V183.4H49.20V178.3H48.30V174.9H47.40V178.7H46.50V173.2H45.60V173.3H44.70V174.8H43.80V170.7H42.90V175.0H42.00V173.6H41.10V173.6H40.20V176.6H39.30V169.4H38.40V170.5H37.50V171.5H36.60V174.8H35.70V171.9H34.80V165.1H33.90V165.0H33.00V172.0H32.10V172.3H31.20V175.6H30.30V171.4H29.40V175.0H28.50V182.1H27.60V178.5H26.70V179.1H25.80V170.2H24.90V172.2H24.00V175.0H23.10V168.3H22.20V169.3H21.30V176.9H20.40V172.7H19.50V176.2H18.60V172.0H17.70V182.1H16.80V179.2H15.90V179.1H15.00V165.9H14.10V167.5H13.20V168.6H12.30V177.3H11.40V173.7H10.50V175.5H9.60V176.2H8.70V180.5H7.80V172.3H6.90V175.7H6.00V175.0H5.10V184.3H4.20Z" fill="#0e8fcd"/>
<path d="M4.20 300.1V269.6H5.10V269.8H6.00V269.4H6.90V272.4H7.80V267.4H8.70V274.1H9.60V277.7H10.50V274.4H11.40V276.1H12.30V274.0H13.20V284.4H14.10V282.4H15.00V275.3H15.90V280.6H16.80V279.0H17.70V277.3H18.60V277.1H19.50V263.1H20.40V278.8H21.30V279.2H22.20V274.7H23.10V279.4H24.00V279.9H24.90V274.5H25.80V274.7H26.70V277.0H27.60V277.3H28.50V270.1H29.40V282.1H30.30V278.6H31.20V280.4H32.10V279.0H33.00V276.4H33.90V285.7H34.80V284.0H35.70V279.0H36.60V282.4H37.50V281.5H38.40V278.5H39.30V270.3H40.20V263.1H41.10V267.1H42.00V270.0H42.90V275.8H43.80V272.6H44.70V275.6H45.60V279.3H46.50V276.3H47.40V274.2H48.30V272.5H49.20V271.5H50.10V270.2H51.00V266.4H51.90V260.8H52.80V265.9H53.70V267.4H54.60V265.3H55.50V256.8H56.40V268.3H57.30V255.2H58.20V252.8H59.10V263.3H60.00V261.9H60.90V269.2H61.80V247.2H62.70V261.0H63.60V272.6H64.50V261.7H65.40V256.5H66.30V262.0H67.20V255.2H68.10V254.2H69.00V265.3H69.90V254.2H70.80V271.1H71.70V266.7H72.60V264.5H73.50V257.2H74.40V265.2H75.30V265.3H76.20V266.7H77.10V260.3H78.00V267.8H78.90V269.9H79.80V263.9H80.70V271.0H81.60V255.5H82.50V256.7H83.40V266.0H84.30V244.2H85.20V262.7H86.10V262.9H87.00V243.7H87.90V255.6H88.80V233.0H89.70V241.8H90.60V238.7H91.50V258.4H92.40V246.6H93.30V229.3H94.20V259.3H95.10V230.3H96.00V244.9H96.90V231.3H97.80V249.3H98.70V235.3H99.60V244.8H100.50V250.3H101.40V233.8H102.30V237.1H103.20V231.0H104.10V231.5H105.00V229.6H105.90V229.3H106.80V229.3H107.70V229.3H108.60V229.3H109.50V229.3H110.40V229.3H111.30V236.9H112.20V238.9H113.10V246.0H114.00V251.2H114.90V264.8H115.80V260.1H116.70V250.8H117.60V254.5H118.50V257.1H119.40V258.6H120.30V268.7H121.20V261.4H122.10V261.0H123.00V263.1H123.90V264.9H124.80V275.4H125.70V274.5H126.60V268.2H127.50V256.4H128.40V257.0H129.30V257.1H130.20V255.1H131.10V251.5H132.00V258.3H132.90V248.3H133.80V240.8H134.70V248.0H135.60V253.6H136.50V252.0H137.40V250.6H138.30V253.5H139.20V258.2H140.10V247.9H141.00V235.3H141.90V243.0H142.80V256.0H143.70V244.3H144.60V242.8H145.50V236.1H146.40V233.0H147.30V230.3H148.20V234.3H149.10V236.5H150.00V243.6H150.90V235.0H151.80V231.1H152.70V229.3H153.60V229.3H154.50V229.3H155.40V229.3H156.30V229.3H157.20V229.3H158.10V229.3H159.00V229.3H159.90V229.3H160.80V232.3H161.70V229.3H162.60V229.3H163.50V229.3H164.40V229.3H165.30V229.3H166.20V229.3H167.10V229.3H168.00V229.3H168.90V229.3H169.80V229.3H170.70V233.3H171.60V229.3H172.50V229.3H173.40V229.3H174.30V229.3H175.20V229.3H176.10V229.3H177.00V229.3H177.90V229.3H178.80V229.3H179.70V229.3H180.60V229.3H181.50V229.3H182.40V229.3H183.30V229.3H184.20V255.2H185.10V229.3H186.00V229.3H186.90V229.3H187.80V229.3H188.70V229.3H189.60V229.3H190.50V229.3H191.40V229.3H192.30V229.3H193.20V229.3H194.10V229.3H195.00V229.3H195.90V239.3H196.80V229.3H197.70V229.3H198.60V242.1H199.50V247.8H200.40V261.2H201.30V264.5H202.20V261.4H203.10V263.9H204.00V261.2H204.90V268.9H205.80V267.1H206.70V266.1H207.60V268.5H208.50V258.6H209.40V271.3H210.30V273.9H211.20V267.4H212.10V268.4H213.00V269.7H213.90V272.1H214.80V268.4H215.70V273.7H216.60V276.5H217.50V284.0H218.40V280.6H219.30V272.0H220.20V259.7H221.10V252.5H222.00V233.5H222.90V230.5H223.80V229.8H224.70V233.4H225.60V229.8H226.50V252.1H227.40V230.7H228.30V247.6H229.20V261.4H230.10V243.0H231.00V235.8H231.90V255.0H232.80V239.2H233.70V253.0H234.60V230.4H235.50V250.4H236.40V244.9H237.30V248.6H238.20V232.7H239.10V235.8H240.00V239.8H240.90V240.9H241.80V239.0H242.70V240.9H243.60V233.2H244.50V230.0H245.40V232.6H246.30V231.3H247.20V240.3H248.10V233.0H249.00V239.7H249.90V231.1H250.80V241.2H251.70V240.1H252.60V236.4H253.50V230.2H254.40V235.1H255.30V232.0H256.20V236.7H257.10V236.4H258.00V236.5H258.90V233.2H259.80V262.1H260.70V262.4H261.60V239.8H262.50V246.1H263.40V230.6H264.30V238.8H265.20V242.4H266.10V229.5H267.00V233.1H267.90V241.1H268.80V234.3H269.70V243.1H270.60V235.1H271.50V239.2H272.40V239.0H273.30V243.8H274.20V244.0H275.10V236.6H276.00V236.4H276.90V230.7H277.80V232.2H278.70V245.4H279.60V247.1H280.50V248.5H281.40V232.2H282.30V236.4H283.20V246.3H284.10V229.5H285.00V234.2H285.90V233.9H286.80V235.6H287.70V241.2H288.60V229.3H289.50V229.3H290.40V229.3H291.30V229.3H292.20V229.3H293.10V229.3H294.00V229.3H294.90V229.3H295.80V229.3H296.70V229.3H297.60V229.3H298.50V229.3H299.40V229.3H300.30V229.3H301.20V229.3H302.10V229.3H303.00V229.3H303.90V229.3H304.80V229.3H305.70V229.3H306.60V229.3H307.50V229.3H308.40V229.3H309.30V229.3H310.20V229.3H311.10V229.3H312.00V229.3H312.90V229.3H313.80V229.3H314.70V229.3H315.60V229.3H316.50V229.3H317.40V229.3H318.30V229.3H319.20V229.3H320.10V229.3H321.00V229.3H321.90V229.3H322.80V233.3H323.70V229.3H324.60V229.3H325.50V229.3H326.40V229.3H327.30V229.3H328.20V229.3H329.10V229.3H330.00V229.3H330.90V229.3H331.80V229.3H332.70V255.2H333.60V229.3H334.50V229.3H335.40V229.3H336.30V229.3H337.20V229.3H338.10V229.3H339.00V229.3H339.90V229.3H340.80V229.3H341.70V232.3H342.60V229.3H343.50V229.3H344.40V229.3H345.30V229.3H346.20V229.3H347.10V233.8H348.00V229.3H348.90V229.3H349.80V229.3H350.70V233.3H351.60V229.3H352.50V229.3H353.40V229.3H354.30V229.3H355.20V229.3H356.10V239.3H357.00V229.3H357.90V241.7H358.80V229.3H359.70V229.3H360.60V229.3H361.50V229.3H362.40V236.3H363.30V229.3H364.20V229.3H365.10V229.3H366.00V239.3H366.90V229.3H367.80V235.3H368.70V229.3H369.60V229.3H370.50V229.3H371.40V229.3H372.30V229.3H373.20V239.3H374.10V229.3H375.00V229.3H375.90V229.3H376.80V229.3H377.70V229.3H378.60V229.3H379.50V232.1H380.40V245.1H381.30V257.6H382.20V254.0H383.10V258.7H384.00V258.2H384.90V265.4H385.80V268.3H386.70V274.7H387.60V270.3H388.50V263.3H389.40V273.8H390.30V274.4H391.20V268.9H392.10V271.4H393.00V281.0H393.90V276.1H394.80V275.3H395.70V275.4H396.60V276.9H397.50V274.6H398.40V268.4H399.30V272.3H400.20V276.8H401.10V282.2H402.00V269.9H402.90V266.2H403.80V272.0H404.70V272.4H405.60V267.5H406.50V268.2H407.40V273.4H408.30V272.3H409.20V272.2H410.10V270.3H411.00V275.5H411.90V261.8H412.80V262.7H413.70V262.2H414.60V261.3H415.50V263.7H416.40V258.0H417.30V260.0H418.20V259.9H419.10V251.0H420.00V253.8H420.90V246.2H421.80V240.8H422.70V245.8H423.60V239.1H424.50V234.4H425.40V229.5H426.30V229.3H427.20V229.3H428.10V229.3H429.00V231.6H429.90V241.8H430.80V239.7H431.70V235.9H432.60V257.7H433.50V253.2H434.40V256.2H435.30V255.5H436.20V270.2H437.10V270.1H438.00V269.9H438.90V275.9H439.80V277.2H440.70V276.8H441.60V278.4H442.50V277.8H443.40V277.6H444.30V276.9H445.20V275.3H446.10V273.4H447.00V267.3H447.90V266.5H448.80V259.7H449.70V253.7H450.60V247.9H451.50V242.4H452.40V248.9H453.30V243.2H454.20V242.8H455.10V244.8H456.00V253.0H456.90V245.1H457.80V240.7H458.70V234.6H459.60V238.7H460.50V234.0H461.40V246.6H462.30V244.2H463.20V234.1H464.10V237.9H465.00V230.3H465.90V232.4H466.80V232.8H467.70V236.1H468.60V243.1H469.50V254.3H470.40V265.9H471.30V237.3H472.20V229.3H473.10V229.3H474.00V229.3H474.90V229.3H475.80V229.3H476.70V229.3H477.60V229.3H478.50V229.3H479.40V229.3H480.30V229.3H481.20V229.3H482.10V232.3H483.00V229.3H483.90V229.3H484.80V229.3H485.70V229.3H486.60V229.3H487.50V229.3H488.40V229.3H489.30V229.3H490.20V229.3H491.10V233.3H492.00V229.3H492.90V229.3H493.80V229.3H494.70V229.3H495.60V229.3H496.50V229.3H497.40V229.3H498.30V229.3H499.20V229.3H500.10V229.3H501.00V229.3H501.90V229.3H502.80V239.3H503.70V229.3H504.60V229.3H505.50V229.3H506.40V229.3H507.30V229.3H508.20V229.3H509.10V229.3H510.00V249.2H510.90V229.3H511.80V229.3H512.70V229.3H513.60V229.3H514.50V229.3H515.40V229.3H516.30V229.3H517.20V229.3H518.10V229.3H519.00V229.3H519.90V232.8H520.80V229.3H521.70V229.3H522.60V229.3H523.50V229.3H524.40V229.3H525.30V229.3H526.20V229.3H527.10V229.3H528.00V229.3H528.90V229.3H529.80V229.3H530.70V229.3H531.60V229.3H532.50V229.3H533.40V246.2H534.30V229.3H535.20V229.3H536.10V229.3H537.00V229.3H537.90V229.3H538.80V229.3H539.70V229.3H540.60V229.3H541.50V229.3H542.40V229.3H543.30V229.3H544.20V236.3H545.10V229.3H546.00V229.3H546.90V229.3H547.80V229.3H548.70V229.3H549.60V229.3H550.50V229.3H551.40V232.3H552.30V229.3H553.20V229.3H554.10V229.3H555.00V229.3H555.90V229.3H556.80V229.3H557.70V229.3H558.60V229.3H559.50V234.4H560.40V290.6H561.30V298.1H562.20V299.3H563.10V299.3H564.00V299.3H564.90V299.3H565.80V299.3H566.70V299.3H567.60V299.3H568.50V299.3H569.40V299.3H570.30V299.3H571.20V299.3H572.10V299.3H572.50V300.1V300.9H572.10V300.9H571.20V300.9H570.30V300.9H569.40V300.9H568.50V300.9H567.60V300.9H566.70V300.9H565.80V300.9H564.90V300.9H564.00V300.9H563.10V300.9H562.20V301.9H561.30V309.6H560.40V356.6H559.50V368.4H558.60V368.4H557.70V368.4H556.80V368.4H555.90V368.4H555.00V368.4H554.10V363.0H553.20V368.4H552.30V368.4H551.40V368.4H550.50V368.4H549.60V368.4H548.70V368.4H547.80V357.0H546.90V368.4H546.00V368.4H545.10V368.4H544.20V368.4H543.30V368.4H542.40V368.4H541.50V368.4H540.60V368.4H539.70V368.4H538.80V359.0H537.90V368.4H537.00V368.4H536.10V368.4H535.20V368.4H534.30V368.4H533.40V368.4H532.50V368.4H531.60V364.0H530.70V368.4H529.80V368.4H528.90V368.4H528.00V368.4H527.10V368.4H526.20V368.4H525.30V355.0H524.40V368.4H523.50V368.4H522.60V368.4H521.70V368.4H520.80V368.4H519.90V368.4H519.00V368.4H518.10V368.4H517.20V368.4H516.30V363.0H515.40V368.4H514.50V368.4H513.60V368.4H512.70V368.4H511.80V368.4H510.90V368.4H510.00V368.4H509.10V368.4H508.20V368.4H507.30V357.0H506.40V368.4H505.50V368.4H504.60V368.4H503.70V368.4H502.80V368.4H501.90V368.4H501.00V368.4H500.10V368.4H499.20V368.4H498.30V365.0H497.40V368.4H496.50V368.4H495.60V368.4H494.70V368.4H493.80V368.4H492.90V368.4H492.00V368.4H491.10V368.4H490.20V360.0H489.30V368.4H488.40V368.4H487.50V368.4H486.60V368.4H485.70V368.4H484.80V368.4H483.90V368.4H483.00V368.4H482.10V368.4H481.20V364.0H480.30V368.4H479.40V368.4H478.50V368.4H477.60V368.4H476.70V368.4H475.80V368.4H474.90V368.4H474.00V368.4H473.10V368.4H472.20V358.8H471.30V333.3H470.40V338.4H469.50V352.7H468.60V367.4H467.70V365.1H466.80V360.7H465.90V367.5H465.00V356.4H464.10V350.8H463.20V337.4H462.30V352.5H461.40V367.5H460.50V356.7H459.60V349.4H458.70V360.5H457.80V341.5H456.90V334.4H456.00V349.2H455.10V364.2H454.20V352.6H453.30V345.4H452.40V335.3H451.50V336.8H450.60V341.9H449.70V330.8H448.80V323.5H447.90V317.7H447.00V318.0H446.10V326.8H445.20V324.7H444.30V330.0H443.40V322.3H442.50V315.8H441.60V324.2H440.70V325.3H439.80V323.8H438.90V326.8H438.00V327.2H437.10V327.7H436.20V323.0H435.30V333.2H434.40V341.5H433.50V349.8H432.60V352.2H431.70V352.8H430.80V363.1H429.90V366.1H429.00V368.4H428.10V368.4H427.20V368.4H426.30V368.4H425.40V366.9H424.50V357.4H423.60V350.2H422.70V339.3H421.80V344.9H420.90V339.1H420.00V333.1H419.10V341.7H418.20V339.5H417.30V335.0H416.40V334.0H415.50V334.9H414.60V339.6H413.70V336.3H412.80V330.7H411.90V330.9H411.00V319.9H410.10V328.4H409.20V326.3H408.30V330.7H407.40V335.1H406.50V334.5H405.60V332.6H404.70V325.2H403.80V319.5H402.90V316.5H402.00V316.1H401.10V316.2H400.20V321.6H399.30V323.1H398.40V321.6H397.50V329.4H396.60V322.6H395.70V332.5H394.80V323.3H393.90V322.6H393.00V331.9H392.10V336.3H391.20V326.3H390.30V329.4H389.40V324.2H388.50V321.4H387.60V331.6H386.70V334.6H385.80V337.4H384.90V339.8H384.00V338.4H383.10V337.6H382.20V345.8H381.30V359.1H380.40V368.4H379.50V368.4H378.60V351.0H377.70V368.4H376.80V368.4H375.90V368.4H375.00V368.4H374.10V354.0H373.20V368.4H372.30V368.4H371.40V368.4H370.50V368.4H369.60V368.4H368.70V368.4H367.80V362.0H366.90V368.4H366.00V368.4H365.10V368.4H364.20V368.4H363.30V368.4H362.40V368.4H361.50V356.0H360.60V368.4H359.70V368.4H358.80V368.4H357.90V368.4H357.00V368.4H356.10V364.0H355.20V368.4H354.30V368.4H353.40V368.4H352.50V368.4H351.60V368.4H350.70V368.4H349.80V359.0H348.90V368.4H348.00V368.4H347.10V368.4H346.20V368.4H345.30V368.4H344.40V368.4H343.50V368.4H342.60V363.0H341.70V368.4H340.80V368.4H339.90V368.4H339.00V368.4H338.10V368.4H337.20V361.0H336.30V368.4H335.40V368.4H334.50V368.4H333.60V341.0H332.70V368.4H331.80V366.0H330.90V368.4H330.00V368.4H329.10V368.4H328.20V368.4H327.30V368.4H326.40V368.4H325.50V365.0H324.60V368.4H323.70V368.4H322.80V365.0H321.90V368.4H321.00V368.4H320.10V361.4H319.20V368.4H318.30V368.4H317.40V368.4H316.50V368.4H315.60V368.4H314.70V357.0H313.80V368.4H312.90V368.4H312.00V368.4H311.10V368.4H310.20V368.4H309.30V368.4H308.40V368.4H307.50V366.0H306.60V368.4H305.70V368.4H304.80V368.4H303.90V354.0H303.00V368.4H302.10V368.4H301.20V368.4H300.30V368.4H299.40V368.4H298.50V368.4H297.60V368.4H296.70V368.4H295.80V368.4H294.90V368.4H294.00V368.4H293.10V368.4H292.20V368.4H291.30V368.4H290.40V368.4H289.50V368.4H288.60V365.6H287.70V365.3H286.80V365.9H285.90V356.0H285.00V367.6H284.10V353.4H283.20V348.2H282.30V349.9H281.40V337.5H280.50V366.4H279.60V365.2H278.70V361.4H277.80V368.3H276.90V350.4H276.00V362.0H275.10V367.1H274.20V368.1H273.30V360.6H272.40V367.5H271.50V364.3H270.60V357.1H269.70V356.3H268.80V367.7H267.90V366.3H267.00V361.1H266.10V363.8H265.20V341.0H264.30V359.3H263.40V339.4H262.50V362.2H261.60V361.8H260.70V360.6H259.80V364.3H258.90V364.4H258.00V349.8H257.10V357.0H256.20V345.0H255.30V362.4H254.40V358.4H253.50V350.3H252.60V352.4H251.70V355.4H250.80V362.4H249.90V359.1H249.00V364.1H248.10V352.2H247.20V352.0H246.30V357.4H245.40V361.6H244.50V357.1H243.60V354.2H242.70V363.2H241.80V357.0H240.90V360.6H240.00V355.2H239.10V352.7H238.20V368.3H237.30V358.1H236.40V363.1H235.50V362.0H234.60V358.0H233.70V362.6H232.80V358.0H231.90V354.2H231.00V349.6H230.10V350.9H229.20V356.1H228.30V365.6H227.40V357.4H226.50V363.1H225.60V365.3H224.70V345.7H223.80V360.7H222.90V362.9H222.00V356.4H221.10V339.4H220.20V322.3H219.30V317.0H218.40V325.1H217.50V327.7H216.60V327.2H215.70V325.4H214.80V324.5H213.90V326.6H213.00V322.7H212.10V324.5H211.20V325.2H210.30V326.7H209.40V329.7H208.50V328.3H207.60V328.9H206.70V327.3H205.80V325.0H204.90V320.6H204.00V323.4H203.10V326.3H202.20V329.1H201.30V332.2H200.40V334.2H199.50V361.7H198.60V368.4H197.70V368.4H196.80V355.0H195.90V368.4H195.00V368.4H194.10V368.4H193.20V368.4H192.30V368.4H191.40V368.4H190.50V368.4H189.60V368.4H188.70V368.4H187.80V368.4H186.90V368.4H186.00V368.4H185.10V345.0H184.20V368.4H183.30V368.4H182.40V368.4H181.50V368.4H180.60V368.4H179.70V368.4H178.80V368.4H177.90V354.4H177.00V368.4H176.10V368.4H175.20V368.4H174.30V368.4H173.40V368.4H172.50V368.4H171.60V368.4H170.70V365.0H169.80V368.4H168.90V368.4H168.00V368.4H167.10V368.4H166.20V362.0H165.30V368.4H164.40V368.4H163.50V368.4H162.60V368.4H161.70V368.4H160.80V368.4H159.90V363.0H159.00V368.4H158.10V368.4H157.20V368.4H156.30V364.0H155.40V368.4H154.50V368.4H153.60V367.6H152.70V362.9H151.80V358.7H150.90V359.1H150.00V366.1H149.10V352.8H148.20V365.0H147.30V360.4H146.40V367.0H145.50V353.4H144.60V352.4H143.70V341.8H142.80V358.4H141.90V356.8H141.00V341.0H140.10V343.3H139.20V344.7H138.30V342.3H137.40V337.9H136.50V346.3H135.60V353.1H134.70V350.8H133.80V346.4H132.90V348.7H132.00V354.2H131.10V348.9H130.20V349.5H129.30V341.4H128.40V332.0H127.50V335.3H126.60V336.3H125.70V319.6H124.80V334.8H123.90V325.7H123.00V333.0H122.10V324.8H121.20V327.2H120.30V336.9H119.40V341.6H118.50V351.8H117.60V349.6H116.70V340.1H115.80V348.4H114.90V347.0H114.00V350.4H113.10V364.4H112.20V363.0H111.30V363.1H110.40V368.0H109.50V367.8H108.60V367.9H107.70V364.5H106.80V364.5H105.90V365.6H105.00V359.9H104.10V364.3H103.20V351.7H102.30V355.7H101.40V363.6H100.50V356.1H99.60V351.3H98.70V364.7H97.80V365.1H96.90V342.5H96.00V360.0H95.10V359.6H94.20V344.5H93.30V337.9H92.40V365.2H91.50V349.2H90.60V359.7H89.70V362.9H88.80V344.6H87.90V344.8H87.00V345.5H86.10V340.3H85.20V348.0H84.30V362.9H83.40V339.6H82.50V344.4H81.60V333.0H80.70V339.3H79.80V334.2H78.90V328.6H78.00V332.9H77.10V344.0H76.20V338.6H75.30V341.8H74.40V331.3H73.50V339.5H72.60V342.4H71.70V332.9H70.80V338.8H69.90V339.8H69.00V335.1H68.10V335.3H67.20V342.3H66.30V343.5H65.40V334.2H64.50V344.9H63.60V331.8H62.70V335.2H61.80V333.8H60.90V328.7H60.00V331.8H59.10V330.2H58.20V324.1H57.30V332.6H56.40V326.6H55.50V332.0H54.60V331.3H53.70V330.7H52.80V334.9H51.90V330.4H51.00V330.7H50.10V334.4H49.20V329.3H48.30V325.9H47.40V329.6H46.50V324.2H45.60V324.3H44.70V325.8H43.80V321.6H42.90V326.0H42.00V324.6H41.10V324.5H40.20V327.6H39.30V320.4H38.40V321.5H37.50V322.4H36.60V325.8H35.70V322.8H34.80V316.1H33.90V316.0H33.00V323.0H32.10V323.2H31.20V326.6H30.30V322.3H29.40V325.9H28.50V333.1H27.60V329.5H26.70V330.0H25.80V321.1H24.90V323.2H24.00V326.0H23.10V319.3H22.20V320.3H21.30V327.8H20.40V323.6H19.50V327.1H18.60V323.0H17.70V333.1H16.80V330.2H15.90V330.1H15.00V316.9H14.10V318.4H13.20V319.6H12.30V328.3H11.40V324.7H10.50V326.5H9.60V327.2H8.70V331.5H7.80V323.3H6.90V326.6H6.00V326.0H5.10V335.3H4.20Z" fill="#0e8fcd"/>
</g>
<g clip-path="url(#selclip)">
<rect x="287.0" y="73.5" width="50.4" height="304.4" fill="#fff"/>
<path d="M287.0 75H337.4M287.0 373.6H337.4M287.0 225.7H337.4" stroke="#6d8596" stroke-width="0.9" stroke-dasharray="2.8 2.1"/>
<path d="M4.20 149.2V118.7H5.10V118.8H6.00V118.4H6.90V121.5H7.80V116.4H8.70V123.2H9.60V126.8H10.50V123.5H11.40V125.2H12.30V123.1H13.20V133.4H14.10V131.5H15.00V124.4H15.90V129.7H16.80V128.1H17.70V126.3H18.60V126.1H19.50V112.2H20.40V127.8H21.30V128.3H22.20V123.8H23.10V128.4H24.00V129.0H24.90V123.6H25.80V123.7H26.70V126.1H27.60V126.4H28.50V119.2H29.40V131.1H30.30V127.7H31.20V129.5H32.10V128.1H33.00V125.5H33.90V134.7H34.80V133.0H35.70V128.1H36.60V131.5H37.50V130.6H38.40V127.6H39.30V119.4H40.20V112.2H41.10V116.2H42.00V119.1H42.90V124.9H43.80V121.7H44.70V124.7H45.60V128.4H46.50V125.3H47.40V123.3H48.30V121.6H49.20V120.6H50.10V119.3H51.00V115.5H51.90V109.9H52.80V115.0H53.70V116.4H54.60V114.4H55.50V105.8H56.40V117.4H57.30V104.3H58.20V101.8H59.10V112.4H60.00V111.0H60.90V118.3H61.80V96.3H62.70V110.1H63.60V121.7H64.50V110.8H65.40V105.6H66.30V111.1H67.20V104.3H68.10V103.3H69.00V114.4H69.90V103.3H70.80V120.1H71.70V115.8H72.60V113.6H73.50V106.3H74.40V114.3H75.30V114.4H76.20V115.8H77.10V109.4H78.00V116.9H78.90V119.0H79.80V112.9H80.70V120.1H81.60V104.6H82.50V105.7H83.40V115.1H84.30V93.3H85.20V111.8H86.10V111.9H87.00V92.8H87.90V104.7H88.80V82.1H89.70V90.9H90.60V87.8H91.50V107.5H92.40V95.7H93.30V78.4H94.20V108.4H95.10V79.4H96.00V93.9H96.90V80.4H97.80V98.4H98.70V84.4H99.60V93.8H100.50V99.4H101.40V82.9H102.30V86.2H103.20V80.1H104.10V80.6H105.00V78.7H105.90V78.4H106.80V78.4H107.70V78.4H108.60V78.4H109.50V78.4H110.40V78.4H111.30V86.0H112.20V88.0H113.10V95.1H114.00V100.3H114.90V113.9H115.80V109.2H116.70V99.9H117.60V103.6H118.50V106.2H119.40V107.7H120.30V117.7H121.20V110.5H122.10V110.1H123.00V112.2H123.90V114.0H124.80V124.5H125.70V123.6H126.60V117.3H127.50V105.5H128.40V106.1H129.30V106.1H130.20V104.2H131.10V100.6H132.00V107.4H132.90V97.4H133.80V89.9H134.70V97.1H135.60V102.7H136.50V101.1H137.40V99.6H138.30V102.6H139.20V107.2H140.10V97.0H141.00V84.4H141.90V92.1H142.80V105.1H143.70V93.4H144.60V91.8H145.50V85.2H146.40V82.1H147.30V79.4H148.20V83.3H149.10V85.6H150.00V92.7H150.90V84.1H151.80V80.2H152.70V78.4H153.60V78.4H154.50V78.4H155.40V78.4H156.30V78.4H157.20V78.4H158.10V78.4H159.00V78.4H159.90V78.4H160.80V81.4H161.70V78.4H162.60V78.4H163.50V78.4H164.40V78.4H165.30V78.4H166.20V78.4H167.10V78.4H168.00V78.4H168.90V78.4H169.80V78.4H170.70V82.4H171.60V78.4H172.50V78.4H173.40V78.4H174.30V78.4H175.20V78.4H176.10V78.4H177.00V78.4H177.90V78.4H178.80V78.4H179.70V78.4H180.60V78.4H181.50V78.4H182.40V78.4H183.30V78.4H184.20V104.3H185.10V78.4H186.00V78.4H186.90V78.4H187.80V78.4H188.70V78.4H189.60V78.4H190.50V78.4H191.40V78.4H192.30V78.4H193.20V78.4H194.10V78.4H195.00V78.4H195.90V88.3H196.80V78.4H197.70V78.4H198.60V91.2H199.50V96.9H200.40V110.3H201.30V113.5H202.20V110.5H203.10V113.0H204.00V110.3H204.90V118.0H205.80V116.1H206.70V115.1H207.60V117.6H208.50V107.7H209.40V120.3H210.30V122.9H211.20V116.5H212.10V117.5H213.00V118.7H213.90V121.2H214.80V117.5H215.70V122.8H216.60V125.6H217.50V133.0H218.40V129.7H219.30V121.0H220.20V108.8H221.10V101.5H222.00V82.6H222.90V79.6H223.80V78.9H224.70V82.5H225.60V78.9H226.50V101.1H227.40V79.8H228.30V96.7H229.20V110.4H230.10V92.1H231.00V84.9H231.90V104.0H232.80V88.3H233.70V102.1H234.60V79.5H235.50V99.5H236.40V94.0H237.30V97.7H238.20V81.8H239.10V84.9H240.00V88.9H240.90V90.0H241.80V88.1H242.70V90.0H243.60V82.3H244.50V79.1H245.40V81.7H246.30V80.4H247.20V89.4H248.10V82.1H249.00V88.8H249.90V80.2H250.80V90.3H251.70V89.2H252.60V85.5H253.50V79.3H254.40V84.2H255.30V81.1H256.20V85.8H257.10V85.5H258.00V85.6H258.90V82.3H259.80V111.2H260.70V111.5H261.60V88.9H262.50V95.2H263.40V79.7H264.30V87.9H265.20V91.5H266.10V78.6H267.00V82.2H267.90V90.2H268.80V83.4H269.70V92.2H270.60V84.2H271.50V88.3H272.40V88.1H273.30V92.9H274.20V93.1H275.10V85.7H276.00V85.5H276.90V79.8H277.80V81.3H278.70V94.5H279.60V96.2H280.50V97.6H281.40V81.3H282.30V85.5H283.20V95.4H284.10V78.6H285.00V83.3H285.90V83.0H286.80V84.7H287.70V90.3H288.60V78.4H289.50V78.4H290.40V78.4H291.30V78.4H292.20V78.4H293.10V78.4H294.00V78.4H294.90V78.4H295.80V78.4H296.70V78.4H297.60V78.4H298.50V78.4H299.40V78.4H300.30V78.4H301.20V78.4H302.10V78.4H303.00V78.4H303.90V78.4H304.80V78.4H305.70V78.4H306.60V78.4H307.50V78.4H308.40V78.4H309.30V78.4H310.20V78.4H311.10V78.4H312.00V78.4H312.90V78.4H313.80V78.4H314.70V78.4H315.60V78.4H316.50V78.4H317.40V78.4H318.30V78.4H319.20V78.4H320.10V78.4H321.00V78.4H321.90V78.4H322.80V82.4H323.70V78.4H324.60V78.4H325.50V78.4H326.40V78.4H327.30V78.4H328.20V78.4H329.10V78.4H330.00V78.4H330.90V78.4H331.80V78.4H332.70V104.3H333.60V78.4H334.50V78.4H335.40V78.4H336.30V78.4H337.20V78.4H338.10V78.4H339.00V78.4H339.90V78.4H340.80V78.4H341.70V81.4H342.60V78.4H343.50V78.4H344.40V78.4H345.30V78.4H346.20V78.4H347.10V82.9H348.00V78.4H348.90V78.4H349.80V78.4H350.70V82.4H351.60V78.4H352.50V78.4H353.40V78.4H354.30V78.4H355.20V78.4H356.10V88.3H357.00V78.4H357.90V90.8H358.80V78.4H359.70V78.4H360.60V78.4H361.50V78.4H362.40V85.4H363.30V78.4H364.20V78.4H365.10V78.4H366.00V88.3H366.90V78.4H367.80V84.4H368.70V78.4H369.60V78.4H370.50V78.4H371.40V78.4H372.30V78.4H373.20V88.3H374.10V78.4H375.00V78.4H375.90V78.4H376.80V78.4H377.70V78.4H378.60V78.4H379.50V81.2H380.40V94.2H381.30V106.7H382.20V103.1H383.10V107.8H384.00V107.3H384.90V114.5H385.80V117.4H386.70V123.7H387.60V119.4H388.50V112.4H389.40V122.9H390.30V123.5H391.20V118.0H392.10V120.4H393.00V130.1H393.90V125.1H394.80V124.4H395.70V124.4H396.60V126.0H397.50V123.7H398.40V117.5H399.30V121.4H400.20V125.8H401.10V131.3H402.00V119.0H402.90V115.3H403.80V121.1H404.70V121.5H405.60V116.6H406.50V117.3H407.40V122.5H408.30V121.4H409.20V121.3H410.10V119.4H411.00V124.6H411.90V110.8H412.80V111.7H413.70V111.2H414.60V110.4H415.50V112.8H416.40V107.1H417.30V109.1H418.20V109.0H419.10V100.1H420.00V102.8H420.90V95.3H421.80V89.9H422.70V94.9H423.60V88.2H424.50V83.5H425.40V78.6H426.30V78.4H427.20V78.4H428.10V78.4H429.00V80.7H429.90V90.9H430.80V88.8H431.70V85.0H432.60V106.8H433.50V102.3H434.40V105.2H435.30V104.5H436.20V119.3H437.10V119.1H438.00V118.9H438.90V124.9H439.80V126.3H440.70V125.9H441.60V127.5H442.50V126.9H443.40V126.6H444.30V126.0H445.20V124.3H446.10V122.5H447.00V116.4H447.90V115.6H448.80V108.8H449.70V102.8H450.60V97.0H451.50V91.5H452.40V98.0H453.30V92.3H454.20V91.8H455.10V93.9H456.00V102.1H456.90V94.2H457.80V89.8H458.70V83.7H459.60V87.8H460.50V83.1H461.40V95.7H462.30V93.3H463.20V83.2H464.10V87.0H465.00V79.4H465.90V81.5H466.80V81.9H467.70V85.2H468.60V92.2H469.50V103.4H470.40V115.0H471.30V86.4H472.20V78.4H473.10V78.4H474.00V78.4H474.90V78.4H475.80V78.4H476.70V78.4H477.60V78.4H478.50V78.4H479.40V78.4H480.30V78.4H481.20V78.4H482.10V81.4H483.00V78.4H483.90V78.4H484.80V78.4H485.70V78.4H486.60V78.4H487.50V78.4H488.40V78.4H489.30V78.4H490.20V78.4H491.10V82.4H492.00V78.4H492.90V78.4H493.80V78.4H494.70V78.4H495.60V78.4H496.50V78.4H497.40V78.4H498.30V78.4H499.20V78.4H500.10V78.4H501.00V78.4H501.90V78.4H502.80V88.3H503.70V78.4H504.60V78.4H505.50V78.4H506.40V78.4H507.30V78.4H508.20V78.4H509.10V78.4H510.00V98.3H510.90V78.4H511.80V78.4H512.70V78.4H513.60V78.4H514.50V78.4H515.40V78.4H516.30V78.4H517.20V78.4H518.10V78.4H519.00V78.4H519.90V81.9H520.80V78.4H521.70V78.4H522.60V78.4H523.50V78.4H524.40V78.4H525.30V78.4H526.20V78.4H527.10V78.4H528.00V78.4H528.90V78.4H529.80V78.4H530.70V78.4H531.60V78.4H532.50V78.4H533.40V95.3H534.30V78.4H535.20V78.4H536.10V78.4H537.00V78.4H537.90V78.4H538.80V78.4H539.70V78.4H540.60V78.4H541.50V78.4H542.40V78.4H543.30V78.4H544.20V85.4H545.10V78.4H546.00V78.4H546.90V78.4H547.80V78.4H548.70V78.4H549.60V78.4H550.50V78.4H551.40V81.4H552.30V78.4H553.20V78.4H554.10V78.4H555.00V78.4H555.90V78.4H556.80V78.4H557.70V78.4H558.60V78.4H559.50V83.5H560.40V139.6H561.30V147.2H562.20V148.3H563.10V148.3H564.00V148.3H564.90V148.3H565.80V148.3H566.70V148.3H567.60V148.3H568.50V148.3H569.40V148.3H570.30V148.3H571.20V148.3H572.10V148.3H572.50V149.2V149.9H572.10V149.9H571.20V149.9H570.30V149.9H569.40V149.9H568.50V149.9H567.60V149.9H566.70V149.9H565.80V149.9H564.90V149.9H564.00V149.9H563.10V149.9H562.20V150.9H561.30V158.6H560.40V205.6H559.50V217.4H558.60V217.4H557.70V217.4H556.80V217.4H555.90V217.4H555.00V217.4H554.10V212.0H553.20V217.4H552.30V217.4H551.40V217.4H550.50V217.4H549.60V217.4H548.70V217.4H547.80V206.0H546.90V217.4H546.00V217.4H545.10V217.4H544.20V217.4H543.30V217.4H542.40V217.4H541.50V217.4H540.60V217.4H539.70V217.4H538.80V208.0H537.90V217.4H537.00V217.4H536.10V217.4H535.20V217.4H534.30V217.4H533.40V217.4H532.50V217.4H531.60V213.0H530.70V217.4H529.80V217.4H528.90V217.4H528.00V217.4H527.10V217.4H526.20V217.4H525.30V204.0H524.40V217.4H523.50V217.4H522.60V217.4H521.70V217.4H520.80V217.4H519.90V217.4H519.00V217.4H518.10V217.4H517.20V217.4H516.30V212.0H515.40V217.4H514.50V217.4H513.60V217.4H512.70V217.4H511.80V217.4H510.90V217.4H510.00V217.4H509.10V217.4H508.20V217.4H507.30V206.0H506.40V217.4H505.50V217.4H504.60V217.4H503.70V217.4H502.80V217.4H501.90V217.4H501.00V217.4H500.10V217.4H499.20V217.4H498.30V214.0H497.40V217.4H496.50V217.4H495.60V217.4H494.70V217.4H493.80V217.4H492.90V217.4H492.00V217.4H491.10V217.4H490.20V209.0H489.30V217.4H488.40V217.4H487.50V217.4H486.60V217.4H485.70V217.4H484.80V217.4H483.90V217.4H483.00V217.4H482.10V217.4H481.20V213.0H480.30V217.4H479.40V217.4H478.50V217.4H477.60V217.4H476.70V217.4H475.80V217.4H474.90V217.4H474.00V217.4H473.10V217.4H472.20V207.8H471.30V182.3H470.40V187.5H469.50V201.7H468.60V216.4H467.70V214.1H466.80V209.7H465.90V216.5H465.00V205.4H464.10V199.8H463.20V186.4H462.30V201.5H461.40V216.5H460.50V205.7H459.60V198.4H458.70V209.5H457.80V190.5H456.90V183.4H456.00V198.2H455.10V213.2H454.20V201.6H453.30V194.4H452.40V184.4H451.50V185.8H450.60V190.9H449.70V179.9H448.80V172.5H447.90V166.7H447.00V167.1H446.10V175.8H445.20V173.8H444.30V179.1H443.40V171.3H442.50V164.9H441.60V173.2H440.70V174.4H439.80V172.8H438.90V175.8H438.00V176.3H437.10V176.7H436.20V172.0H435.30V182.2H434.40V190.5H433.50V198.8H432.60V201.2H431.70V201.8H430.80V212.2H429.90V215.1H429.00V217.4H428.10V217.4H427.20V217.4H426.30V217.4H425.40V215.9H424.50V206.4H423.60V199.2H422.70V188.3H421.80V193.9H420.90V188.1H420.00V182.2H419.10V190.7H418.20V188.5H417.30V184.0H416.40V183.1H415.50V183.9H414.60V188.6H413.70V185.3H412.80V179.8H411.90V179.9H411.00V168.9H410.10V177.5H409.20V175.4H408.30V179.7H407.40V184.1H406.50V183.5H405.60V181.6H404.70V174.2H403.80V168.5H402.90V165.6H402.00V165.1H401.10V165.2H400.20V170.6H399.30V172.2H398.40V170.6H397.50V178.5H396.60V171.7H395.70V181.5H394.80V172.3H393.90V171.6H393.00V181.0H392.10V185.3H391.20V175.4H390.30V178.5H389.40V173.2H388.50V170.4H387.60V180.6H386.70V183.6H385.80V186.4H384.90V188.8H384.00V187.4H383.10V186.6H382.20V194.8H381.30V208.1H380.40V217.4H379.50V217.4H378.60V200.0H377.70V217.4H376.80V217.4H375.90V217.4H375.00V217.4H374.10V203.0H373.20V217.4H372.30V217.4H371.40V217.4H370.50V217.4H369.60V217.4H368.70V217.4H367.80V211.0H366.90V217.4H366.00V217.4H365.10V217.4H364.20V217.4H363.30V217.4H362.40V217.4H361.50V205.0H360.60V217.4H359.70V217.4H358.80V217.4H357.90V217.4H357.00V217.4H356.10V213.0H355.20V217.4H354.30V217.4H353.40V217.4H352.50V217.4H351.60V217.4H350.70V217.4H349.80V208.0H348.90V217.4H348.00V217.4H347.10V217.4H346.20V217.4H345.30V217.4H344.40V217.4H343.50V217.4H342.60V212.0H341.70V217.4H340.80V217.4H339.90V217.4H339.00V217.4H338.10V217.4H337.20V210.0H336.30V217.4H335.40V217.4H334.50V217.4H333.60V190.0H332.70V217.4H331.80V215.0H330.90V217.4H330.00V217.4H329.10V217.4H328.20V217.4H327.30V217.4H326.40V217.4H325.50V214.0H324.60V217.4H323.70V217.4H322.80V214.0H321.90V217.4H321.00V217.4H320.10V210.4H319.20V217.4H318.30V217.4H317.40V217.4H316.50V217.4H315.60V217.4H314.70V206.0H313.80V217.4H312.90V217.4H312.00V217.4H311.10V217.4H310.20V217.4H309.30V217.4H308.40V217.4H307.50V215.0H306.60V217.4H305.70V217.4H304.80V217.4H303.90V203.0H303.00V217.4H302.10V217.4H301.20V217.4H300.30V217.4H299.40V217.4H298.50V217.4H297.60V217.4H296.70V217.4H295.80V217.4H294.90V217.4H294.00V217.4H293.10V217.4H292.20V217.4H291.30V217.4H290.40V217.4H289.50V217.4H288.60V214.6H287.70V214.3H286.80V214.9H285.90V205.0H285.00V216.6H284.10V202.4H283.20V197.3H282.30V198.9H281.40V186.5H280.50V215.4H279.60V214.2H278.70V210.4H277.80V217.3H276.90V199.4H276.00V211.0H275.10V216.1H274.20V217.1H273.30V209.7H272.40V216.5H271.50V213.3H270.60V206.1H269.70V205.3H268.80V216.7H267.90V215.3H267.00V210.1H266.10V212.8H265.20V190.0H264.30V208.3H263.40V188.4H262.50V211.2H261.60V210.8H260.70V209.6H259.80V213.3H258.90V213.4H258.00V198.8H257.10V206.0H256.20V194.0H255.30V211.4H254.40V207.4H253.50V199.3H252.60V201.5H251.70V204.4H250.80V211.4H249.90V208.2H249.00V213.1H248.10V201.2H247.20V201.0H246.30V206.4H245.40V210.6H244.50V206.1H243.60V203.2H242.70V212.2H241.80V206.0H240.90V209.6H240.00V204.2H239.10V201.7H238.20V217.3H237.30V207.1H236.40V212.1H235.50V211.0H234.60V207.0H233.70V211.6H232.80V207.0H231.90V203.2H231.00V198.6H230.10V199.9H229.20V205.2H228.30V214.6H227.40V206.4H226.50V212.1H225.60V214.3H224.70V194.7H223.80V209.7H222.90V211.9H222.00V205.4H221.10V188.4H220.20V171.3H219.30V166.1H218.40V174.2H217.50V176.7H216.60V176.3H215.70V174.5H214.80V173.5H213.90V175.7H213.00V171.7H212.10V173.6H211.20V174.2H210.30V175.7H209.40V178.8H208.50V177.3H207.60V178.0H206.70V176.4H205.80V174.0H204.90V169.6H204.00V172.4H203.10V175.4H202.20V178.2H201.30V181.3H200.40V183.2H199.50V210.7H198.60V217.4H197.70V217.4H196.80V204.0H195.90V217.4H195.00V217.4H194.10V217.4H193.20V217.4H192.30V217.4H191.40V217.4H190.50V217.4H189.60V217.4H188.70V217.4H187.80V217.4H186.90V217.4H186.00V217.4H185.10V194.0H184.20V217.4H183.30V217.4H182.40V217.4H181.50V217.4H180.60V217.4H179.70V217.4H178.80V217.4H177.90V203.4H177.00V217.4H176.10V217.4H175.20V217.4H174.30V217.4H173.40V217.4H172.50V217.4H171.60V217.4H170.70V214.0H169.80V217.4H168.90V217.4H168.00V217.4H167.10V217.4H166.20V211.0H165.30V217.4H164.40V217.4H163.50V217.4H162.60V217.4H161.70V217.4H160.80V217.4H159.90V212.0H159.00V217.4H158.10V217.4H157.20V217.4H156.30V213.0H155.40V217.4H154.50V217.4H153.60V216.6H152.70V211.9H151.80V207.7H150.90V208.1H150.00V215.1H149.10V201.8H148.20V214.0H147.30V209.4H146.40V216.0H145.50V202.4H144.60V201.4H143.70V190.9H142.80V207.4H141.90V205.8H141.00V190.0H140.10V192.3H139.20V193.8H138.30V191.3H137.40V187.0H136.50V195.3H135.60V202.1H134.70V199.8H133.80V195.4H132.90V197.7H132.00V203.2H131.10V198.0H130.20V198.5H129.30V190.5H128.40V181.0H127.50V184.3H126.60V185.4H125.70V168.6H124.80V183.8H123.90V174.7H123.00V182.1H122.10V173.8H121.20V176.2H120.30V185.9H119.40V190.6H118.50V200.8H117.60V198.6H116.70V189.2H115.80V197.4H114.90V196.0H114.00V199.4H113.10V213.4H112.20V212.0H111.30V212.1H110.40V217.0H109.50V216.8H108.60V216.9H107.70V213.5H106.80V213.5H105.90V214.6H105.00V208.9H104.10V213.3H103.20V200.7H102.30V204.7H101.40V212.6H100.50V205.1H99.60V200.3H98.70V213.7H97.80V214.1H96.90V191.5H96.00V209.0H95.10V208.6H94.20V193.5H93.30V186.9H92.40V214.2H91.50V198.2H90.60V208.7H89.70V211.9H88.80V193.6H87.90V193.8H87.00V194.5H86.10V189.3H85.20V197.0H84.30V211.9H83.40V188.6H82.50V193.4H81.60V182.0H80.70V188.4H79.80V183.3H78.90V177.6H78.00V181.9H77.10V193.1H76.20V187.7H75.30V190.8H74.40V180.3H73.50V188.5H72.60V191.4H71.70V181.9H70.80V187.9H69.90V188.8H69.00V184.1H68.10V184.3H67.20V191.3H66.30V192.6H65.40V183.2H64.50V193.9H63.60V180.8H62.70V184.2H61.80V182.8H60.90V177.7H60.00V180.8H59.10V179.3H58.20V173.1H57.30V181.6H56.40V175.6H55.50V181.0H54.60V180.3H53.70V179.7H52.80V183.9H51.90V179.5H51.00V179.7H50.10V183.4H49.20V178.3H48.30V174.9H47.40V178.7H46.50V173.2H45.60V173.3H44.70V174.8H43.80V170.7H42.90V175.0H42.00V173.6H41.10V173.6H40.20V176.6H39.30V169.4H38.40V170.5H37.50V171.5H36.60V174.8H35.70V171.9H34.80V165.1H33.90V165.0H33.00V172.0H32.10V172.3H31.20V175.6H30.30V171.4H29.40V175.0H28.50V182.1H27.60V178.5H26.70V179.1H25.80V170.2H24.90V172.2H24.00V175.0H23.10V168.3H22.20V169.3H21.30V176.9H20.40V172.7H19.50V176.2H18.60V172.0H17.70V182.1H16.80V179.2H15.90V179.1H15.00V165.9H14.10V167.5H13.20V168.6H12.30V177.3H11.40V173.7H10.50V175.5H9.60V176.2H8.70V180.5H7.80V172.3H6.90V175.7H6.00V175.0H5.10V184.3H4.20Z" fill="#20475f"/>
<path d="M4.20 300.1V269.6H5.10V269.8H6.00V269.4H6.90V272.4H7.80V267.4H8.70V274.1H9.60V277.7H10.50V274.4H11.40V276.1H12.30V274.0H13.20V284.4H14.10V282.4H15.00V275.3H15.90V280.6H16.80V279.0H17.70V277.3H18.60V277.1H19.50V263.1H20.40V278.8H21.30V279.2H22.20V274.7H23.10V279.4H24.00V279.9H24.90V274.5H25.80V274.7H26.70V277.0H27.60V277.3H28.50V270.1H29.40V282.1H30.30V278.6H31.20V280.4H32.10V279.0H33.00V276.4H33.90V285.7H34.80V284.0H35.70V279.0H36.60V282.4H37.50V281.5H38.40V278.5H39.30V270.3H40.20V263.1H41.10V267.1H42.00V270.0H42.90V275.8H43.80V272.6H44.70V275.6H45.60V279.3H46.50V276.3H47.40V274.2H48.30V272.5H49.20V271.5H50.10V270.2H51.00V266.4H51.90V260.8H52.80V265.9H53.70V267.4H54.60V265.3H55.50V256.8H56.40V268.3H57.30V255.2H58.20V252.8H59.10V263.3H60.00V261.9H60.90V269.2H61.80V247.2H62.70V261.0H63.60V272.6H64.50V261.7H65.40V256.5H66.30V262.0H67.20V255.2H68.10V254.2H69.00V265.3H69.90V254.2H70.80V271.1H71.70V266.7H72.60V264.5H73.50V257.2H74.40V265.2H75.30V265.3H76.20V266.7H77.10V260.3H78.00V267.8H78.90V269.9H79.80V263.9H80.70V271.0H81.60V255.5H82.50V256.7H83.40V266.0H84.30V244.2H85.20V262.7H86.10V262.9H87.00V243.7H87.90V255.6H88.80V233.0H89.70V241.8H90.60V238.7H91.50V258.4H92.40V246.6H93.30V229.3H94.20V259.3H95.10V230.3H96.00V244.9H96.90V231.3H97.80V249.3H98.70V235.3H99.60V244.8H100.50V250.3H101.40V233.8H102.30V237.1H103.20V231.0H104.10V231.5H105.00V229.6H105.90V229.3H106.80V229.3H107.70V229.3H108.60V229.3H109.50V229.3H110.40V229.3H111.30V236.9H112.20V238.9H113.10V246.0H114.00V251.2H114.90V264.8H115.80V260.1H116.70V250.8H117.60V254.5H118.50V257.1H119.40V258.6H120.30V268.7H121.20V261.4H122.10V261.0H123.00V263.1H123.90V264.9H124.80V275.4H125.70V274.5H126.60V268.2H127.50V256.4H128.40V257.0H129.30V257.1H130.20V255.1H131.10V251.5H132.00V258.3H132.90V248.3H133.80V240.8H134.70V248.0H135.60V253.6H136.50V252.0H137.40V250.6H138.30V253.5H139.20V258.2H140.10V247.9H141.00V235.3H141.90V243.0H142.80V256.0H143.70V244.3H144.60V242.8H145.50V236.1H146.40V233.0H147.30V230.3H148.20V234.3H149.10V236.5H150.00V243.6H150.90V235.0H151.80V231.1H152.70V229.3H153.60V229.3H154.50V229.3H155.40V229.3H156.30V229.3H157.20V229.3H158.10V229.3H159.00V229.3H159.90V229.3H160.80V232.3H161.70V229.3H162.60V229.3H163.50V229.3H164.40V229.3H165.30V229.3H166.20V229.3H167.10V229.3H168.00V229.3H168.90V229.3H169.80V229.3H170.70V233.3H171.60V229.3H172.50V229.3H173.40V229.3H174.30V229.3H175.20V229.3H176.10V229.3H177.00V229.3H177.90V229.3H178.80V229.3H179.70V229.3H180.60V229.3H181.50V229.3H182.40V229.3H183.30V229.3H184.20V255.2H185.10V229.3H186.00V229.3H186.90V229.3H187.80V229.3H188.70V229.3H189.60V229.3H190.50V229.3H191.40V229.3H192.30V229.3H193.20V229.3H194.10V229.3H195.00V229.3H195.90V239.3H196.80V229.3H197.70V229.3H198.60V242.1H199.50V247.8H200.40V261.2H201.30V264.5H202.20V261.4H203.10V263.9H204.00V261.2H204.90V268.9H205.80V267.1H206.70V266.1H207.60V268.5H208.50V258.6H209.40V271.3H210.30V273.9H211.20V267.4H212.10V268.4H213.00V269.7H213.90V272.1H214.80V268.4H215.70V273.7H216.60V276.5H217.50V284.0H218.40V280.6H219.30V272.0H220.20V259.7H221.10V252.5H222.00V233.5H222.90V230.5H223.80V229.8H224.70V233.4H225.60V229.8H226.50V252.1H227.40V230.7H228.30V247.6H229.20V261.4H230.10V243.0H231.00V235.8H231.90V255.0H232.80V239.2H233.70V253.0H234.60V230.4H235.50V250.4H236.40V244.9H237.30V248.6H238.20V232.7H239.10V235.8H240.00V239.8H240.90V240.9H241.80V239.0H242.70V240.9H243.60V233.2H244.50V230.0H245.40V232.6H246.30V231.3H247.20V240.3H248.10V233.0H249.00V239.7H249.90V231.1H250.80V241.2H251.70V240.1H252.60V236.4H253.50V230.2H254.40V235.1H255.30V232.0H256.20V236.7H257.10V236.4H258.00V236.5H258.90V233.2H259.80V262.1H260.70V262.4H261.60V239.8H262.50V246.1H263.40V230.6H264.30V238.8H265.20V242.4H266.10V229.5H267.00V233.1H267.90V241.1H268.80V234.3H269.70V243.1H270.60V235.1H271.50V239.2H272.40V239.0H273.30V243.8H274.20V244.0H275.10V236.6H276.00V236.4H276.90V230.7H277.80V232.2H278.70V245.4H279.60V247.1H280.50V248.5H281.40V232.2H282.30V236.4H283.20V246.3H284.10V229.5H285.00V234.2H285.90V233.9H286.80V235.6H287.70V241.2H288.60V229.3H289.50V229.3H290.40V229.3H291.30V229.3H292.20V229.3H293.10V229.3H294.00V229.3H294.90V229.3H295.80V229.3H296.70V229.3H297.60V229.3H298.50V229.3H299.40V229.3H300.30V229.3H301.20V229.3H302.10V229.3H303.00V229.3H303.90V229.3H304.80V229.3H305.70V229.3H306.60V229.3H307.50V229.3H308.40V229.3H309.30V229.3H310.20V229.3H311.10V229.3H312.00V229.3H312.90V229.3H313.80V229.3H314.70V229.3H315.60V229.3H316.50V229.3H317.40V229.3H318.30V229.3H319.20V229.3H320.10V229.3H321.00V229.3H321.90V229.3H322.80V233.3H323.70V229.3H324.60V229.3H325.50V229.3H326.40V229.3H327.30V229.3H328.20V229.3H329.10V229.3H330.00V229.3H330.90V229.3H331.80V229.3H332.70V255.2H333.60V229.3H334.50V229.3H335.40V229.3H336.30V229.3H337.20V229.3H338.10V229.3H339.00V229.3H339.90V229.3H340.80V229.3H341.70V232.3H342.60V229.3H343.50V229.3H344.40V229.3H345.30V229.3H346.20V229.3H347.10V233.8H348.00V229.3H348.90V229.3H349.80V229.3H350.70V233.3H351.60V229.3H352.50V229.3H353.40V229.3H354.30V229.3H355.20V229.3H356.10V239.3H357.00V229.3H357.90V241.7H358.80V229.3H359.70V229.3H360.60V229.3H361.50V229.3H362.40V236.3H363.30V229.3H364.20V229.3H365.10V229.3H366.00V239.3H366.90V229.3H367.80V235.3H368.70V229.3H369.60V229.3H370.50V229.3H371.40V229.3H372.30V229.3H373.20V239.3H374.10V229.3H375.00V229.3H375.90V229.3H376.80V229.3H377.70V229.3H378.60V229.3H379.50V232.1H380.40V245.1H381.30V257.6H382.20V254.0H383.10V258.7H384.00V258.2H384.90V265.4H385.80V268.3H386.70V274.7H387.60V270.3H388.50V263.3H389.40V273.8H390.30V274.4H391.20V268.9H392.10V271.4H393.00V281.0H393.90V276.1H394.80V275.3H395.70V275.4H396.60V276.9H397.50V274.6H398.40V268.4H399.30V272.3H400.20V276.8H401.10V282.2H402.00V269.9H402.90V266.2H403.80V272.0H404.70V272.4H405.60V267.5H406.50V268.2H407.40V273.4H408.30V272.3H409.20V272.2H410.10V270.3H411.00V275.5H411.90V261.8H412.80V262.7H413.70V262.2H414.60V261.3H415.50V263.7H416.40V258.0H417.30V260.0H418.20V259.9H419.10V251.0H420.00V253.8H420.90V246.2H421.80V240.8H422.70V245.8H423.60V239.1H424.50V234.4H425.40V229.5H426.30V229.3H427.20V229.3H428.10V229.3H429.00V231.6H429.90V241.8H430.80V239.7H431.70V235.9H432.60V257.7H433.50V253.2H434.40V256.2H435.30V255.5H436.20V270.2H437.10V270.1H438.00V269.9H438.90V275.9H439.80V277.2H440.70V276.8H441.60V278.4H442.50V277.8H443.40V277.6H444.30V276.9H445.20V275.3H446.10V273.4H447.00V267.3H447.90V266.5H448.80V259.7H449.70V253.7H450.60V247.9H451.50V242.4H452.40V248.9H453.30V243.2H454.20V242.8H455.10V244.8H456.00V253.0H456.90V245.1H457.80V240.7H458.70V234.6H459.60V238.7H460.50V234.0H461.40V246.6H462.30V244.2H463.20V234.1H464.10V237.9H465.00V230.3H465.90V232.4H466.80V232.8H467.70V236.1H468.60V243.1H469.50V254.3H470.40V265.9H471.30V237.3H472.20V229.3H473.10V229.3H474.00V229.3H474.90V229.3H475.80V229.3H476.70V229.3H477.60V229.3H478.50V229.3H479.40V229.3H480.30V229.3H481.20V229.3H482.10V232.3H483.00V229.3H483.90V229.3H484.80V229.3H485.70V229.3H486.60V229.3H487.50V229.3H488.40V229.3H489.30V229.3H490.20V229.3H491.10V233.3H492.00V229.3H492.90V229.3H493.80V229.3H494.70V229.3H495.60V229.3H496.50V229.3H497.40V229.3H498.30V229.3H499.20V229.3H500.10V229.3H501.00V229.3H501.90V229.3H502.80V239.3H503.70V229.3H504.60V229.3H505.50V229.3H506.40V229.3H507.30V229.3H508.20V229.3H509.10V229.3H510.00V249.2H510.90V229.3H511.80V229.3H512.70V229.3H513.60V229.3H514.50V229.3H515.40V229.3H516.30V229.3H517.20V229.3H518.10V229.3H519.00V229.3H519.90V232.8H520.80V229.3H521.70V229.3H522.60V229.3H523.50V229.3H524.40V229.3H525.30V229.3H526.20V229.3H527.10V229.3H528.00V229.3H528.90V229.3H529.80V229.3H530.70V229.3H531.60V229.3H532.50V229.3H533.40V246.2H534.30V229.3H535.20V229.3H536.10V229.3H537.00V229.3H537.90V229.3H538.80V229.3H539.70V229.3H540.60V229.3H541.50V229.3H542.40V229.3H543.30V229.3H544.20V236.3H545.10V229.3H546.00V229.3H546.90V229.3H547.80V229.3H548.70V229.3H549.60V229.3H550.50V229.3H551.40V232.3H552.30V229.3H553.20V229.3H554.10V229.3H555.00V229.3H555.90V229.3H556.80V229.3H557.70V229.3H558.60V229.3H559.50V234.4H560.40V290.6H561.30V298.1H562.20V299.3H563.10V299.3H564.00V299.3H564.90V299.3H565.80V299.3H566.70V299.3H567.60V299.3H568.50V299.3H569.40V299.3H570.30V299.3H571.20V299.3H572.10V299.3H572.50V300.1V300.9H572.10V300.9H571.20V300.9H570.30V300.9H569.40V300.9H568.50V300.9H567.60V300.9H566.70V300.9H565.80V300.9H564.90V300.9H564.00V300.9H563.10V300.9H562.20V301.9H561.30V309.6H560.40V356.6H559.50V368.4H558.60V368.4H557.70V368.4H556.80V368.4H555.90V368.4H555.00V368.4H554.10V363.0H553.20V368.4H552.30V368.4H551.40V368.4H550.50V368.4H549.60V368.4H548.70V368.4H547.80V357.0H546.90V368.4H546.00V368.4H545.10V368.4H544.20V368.4H543.30V368.4H542.40V368.4H541.50V368.4H540.60V368.4H539.70V368.4H538.80V359.0H537.90V368.4H537.00V368.4H536.10V368.4H535.20V368.4H534.30V368.4H533.40V368.4H532.50V368.4H531.60V364.0H530.70V368.4H529.80V368.4H528.90V368.4H528.00V368.4H527.10V368.4H526.20V368.4H525.30V355.0H524.40V368.4H523.50V368.4H522.60V368.4H521.70V368.4H520.80V368.4H519.90V368.4H519.00V368.4H518.10V368.4H517.20V368.4H516.30V363.0H515.40V368.4H514.50V368.4H513.60V368.4H512.70V368.4H511.80V368.4H510.90V368.4H510.00V368.4H509.10V368.4H508.20V368.4H507.30V357.0H506.40V368.4H505.50V368.4H504.60V368.4H503.70V368.4H502.80V368.4H501.90V368.4H501.00V368.4H500.10V368.4H499.20V368.4H498.30V365.0H497.40V368.4H496.50V368.4H495.60V368.4H494.70V368.4H493.80V368.4H492.90V368.4H492.00V368.4H491.10V368.4H490.20V360.0H489.30V368.4H488.40V368.4H487.50V368.4H486.60V368.4H485.70V368.4H484.80V368.4H483.90V368.4H483.00V368.4H482.10V368.4H481.20V364.0H480.30V368.4H479.40V368.4H478.50V368.4H477.60V368.4H476.70V368.4H475.80V368.4H474.90V368.4H474.00V368.4H473.10V368.4H472.20V358.8H471.30V333.3H470.40V338.4H469.50V352.7H468.60V367.4H467.70V365.1H466.80V360.7H465.90V367.5H465.00V356.4H464.10V350.8H463.20V337.4H462.30V352.5H461.40V367.5H460.50V356.7H459.60V349.4H458.70V360.5H457.80V341.5H456.90V334.4H456.00V349.2H455.10V364.2H454.20V352.6H453.30V345.4H452.40V335.3H451.50V336.8H450.60V341.9H449.70V330.8H448.80V323.5H447.90V317.7H447.00V318.0H446.10V326.8H445.20V324.7H444.30V330.0H443.40V322.3H442.50V315.8H441.60V324.2H440.70V325.3H439.80V323.8H438.90V326.8H438.00V327.2H437.10V327.7H436.20V323.0H435.30V333.2H434.40V341.5H433.50V349.8H432.60V352.2H431.70V352.8H430.80V363.1H429.90V366.1H429.00V368.4H428.10V368.4H427.20V368.4H426.30V368.4H425.40V366.9H424.50V357.4H423.60V350.2H422.70V339.3H421.80V344.9H420.90V339.1H420.00V333.1H419.10V341.7H418.20V339.5H417.30V335.0H416.40V334.0H415.50V334.9H414.60V339.6H413.70V336.3H412.80V330.7H411.90V330.9H411.00V319.9H410.10V328.4H409.20V326.3H408.30V330.7H407.40V335.1H406.50V334.5H405.60V332.6H404.70V325.2H403.80V319.5H402.90V316.5H402.00V316.1H401.10V316.2H400.20V321.6H399.30V323.1H398.40V321.6H397.50V329.4H396.60V322.6H395.70V332.5H394.80V323.3H393.90V322.6H393.00V331.9H392.10V336.3H391.20V326.3H390.30V329.4H389.40V324.2H388.50V321.4H387.60V331.6H386.70V334.6H385.80V337.4H384.90V339.8H384.00V338.4H383.10V337.6H382.20V345.8H381.30V359.1H380.40V368.4H379.50V368.4H378.60V351.0H377.70V368.4H376.80V368.4H375.90V368.4H375.00V368.4H374.10V354.0H373.20V368.4H372.30V368.4H371.40V368.4H370.50V368.4H369.60V368.4H368.70V368.4H367.80V362.0H366.90V368.4H366.00V368.4H365.10V368.4H364.20V368.4H363.30V368.4H362.40V368.4H361.50V356.0H360.60V368.4H359.70V368.4H358.80V368.4H357.90V368.4H357.00V368.4H356.10V364.0H355.20V368.4H354.30V368.4H353.40V368.4H352.50V368.4H351.60V368.4H350.70V368.4H349.80V359.0H348.90V368.4H348.00V368.4H347.10V368.4H346.20V368.4H345.30V368.4H344.40V368.4H343.50V368.4H342.60V363.0H341.70V368.4H340.80V368.4H339.90V368.4H339.00V368.4H338.10V368.4H337.20V361.0H336.30V368.4H335.40V368.4H334.50V368.4H333.60V341.0H332.70V368.4H331.80V366.0H330.90V368.4H330.00V368.4H329.10V368.4H328.20V368.4H327.30V368.4H326.40V368.4H325.50V365.0H324.60V368.4H323.70V368.4H322.80V365.0H321.90V368.4H321.00V368.4H320.10V361.4H319.20V368.4H318.30V368.4H317.40V368.4H316.50V368.4H315.60V368.4H314.70V357.0H313.80V368.4H312.90V368.4H312.00V368.4H311.10V368.4H310.20V368.4H309.30V368.4H308.40V368.4H307.50V366.0H306.60V368.4H305.70V368.4H304.80V368.4H303.90V354.0H303.00V368.4H302.10V368.4H301.20V368.4H300.30V368.4H299.40V368.4H298.50V368.4H297.60V368.4H296.70V368.4H295.80V368.4H294.90V368.4H294.00V368.4H293.10V368.4H292.20V368.4H291.30V368.4H290.40V368.4H289.50V368.4H288.60V365.6H287.70V365.3H286.80V365.9H285.90V356.0H285.00V367.6H284.10V353.4H283.20V348.2H282.30V349.9H281.40V337.5H280.50V366.4H279.60V365.2H278.70V361.4H277.80V368.3H276.90V350.4H276.00V362.0H275.10V367.1H274.20V368.1H273.30V360.6H272.40V367.5H271.50V364.3H270.60V357.1H269.70V356.3H268.80V367.7H267.90V366.3H267.00V361.1H266.10V363.8H265.20V341.0H264.30V359.3H263.40V339.4H262.50V362.2H261.60V361.8H260.70V360.6H259.80V364.3H258.90V364.4H258.00V349.8H257.10V357.0H256.20V345.0H255.30V362.4H254.40V358.4H253.50V350.3H252.60V352.4H251.70V355.4H250.80V362.4H249.90V359.1H249.00V364.1H248.10V352.2H247.20V352.0H246.30V357.4H245.40V361.6H244.50V357.1H243.60V354.2H242.70V363.2H241.80V357.0H240.90V360.6H240.00V355.2H239.10V352.7H238.20V368.3H237.30V358.1H236.40V363.1H235.50V362.0H234.60V358.0H233.70V362.6H232.80V358.0H231.90V354.2H231.00V349.6H230.10V350.9H229.20V356.1H228.30V365.6H227.40V357.4H226.50V363.1H225.60V365.3H224.70V345.7H223.80V360.7H222.90V362.9H222.00V356.4H221.10V339.4H220.20V322.3H219.30V317.0H218.40V325.1H217.50V327.7H216.60V327.2H215.70V325.4H214.80V324.5H213.90V326.6H213.00V322.7H212.10V324.5H211.20V325.2H210.30V326.7H209.40V329.7H208.50V328.3H207.60V328.9H206.70V327.3H205.80V325.0H204.90V320.6H204.00V323.4H203.10V326.3H202.20V329.1H201.30V332.2H200.40V334.2H199.50V361.7H198.60V368.4H197.70V368.4H196.80V355.0H195.90V368.4H195.00V368.4H194.10V368.4H193.20V368.4H192.30V368.4H191.40V368.4H190.50V368.4H189.60V368.4H188.70V368.4H187.80V368.4H186.90V368.4H186.00V368.4H185.10V345.0H184.20V368.4H183.30V368.4H182.40V368.4H181.50V368.4H180.60V368.4H179.70V368.4H178.80V368.4H177.90V354.4H177.00V368.4H176.10V368.4H175.20V368.4H174.30V368.4H173.40V368.4H172.50V368.4H171.60V368.4H170.70V365.0H169.80V368.4H168.90V368.4H168.00V368.4H167.10V368.4H166.20V362.0H165.30V368.4H164.40V368.4H163.50V368.4H162.60V368.4H161.70V368.4H160.80V368.4H159.90V363.0H159.00V368.4H158.10V368.4H157.20V368.4H156.30V364.0H155.40V368.4H154.50V368.4H153.60V367.6H152.70V362.9H151.80V358.7H150.90V359.1H150.00V366.1H149.10V352.8H148.20V365.0H147.30V360.4H146.40V367.0H145.50V353.4H144.60V352.4H143.70V341.8H142.80V358.4H141.90V356.8H141.00V341.0H140.10V343.3H139.20V344.7H138.30V342.3H137.40V337.9H136.50V346.3H135.60V353.1H134.70V350.8H133.80V346.4H132.90V348.7H132.00V354.2H131.10V348.9H130.20V349.5H129.30V341.4H128.40V332.0H127.50V335.3H126.60V336.3H125.70V319.6H124.80V334.8H123.90V325.7H123.00V333.0H122.10V324.8H121.20V327.2H120.30V336.9H119.40V341.6H118.50V351.8H117.60V349.6H116.70V340.1H115.80V348.4H114.90V347.0H114.00V350.4H113.10V364.4H112.20V363.0H111.30V363.1H110.40V368.0H109.50V367.8H108.60V367.9H107.70V364.5H106.80V364.5H105.90V365.6H105.00V359.9H104.10V364.3H103.20V351.7H102.30V355.7H101.40V363.6H100.50V356.1H99.60V351.3H98.70V364.7H97.80V365.1H96.90V342.5H96.00V360.0H95.10V359.6H94.20V344.5H93.30V337.9H92.40V365.2H91.50V349.2H90.60V359.7H89.70V362.9H88.80V344.6H87.90V344.8H87.00V345.5H86.10V340.3H85.20V348.0H84.30V362.9H83.40V339.6H82.50V344.4H81.60V333.0H80.70V339.3H79.80V334.2H78.90V328.6H78.00V332.9H77.10V344.0H76.20V338.6H75.30V341.8H74.40V331.3H73.50V339.5H72.60V342.4H71.70V332.9H70.80V338.8H69.90V339.8H69.00V335.1H68.10V335.3H67.20V342.3H66.30V343.5H65.40V334.2H64.50V344.9H63.60V331.8H62.70V335.2H61.80V333.8H60.90V328.7H60.00V331.8H59.10V330.2H58.20V324.1H57.30V332.6H56.40V326.6H55.50V332.0H54.60V331.3H53.70V330.7H52.80V334.9H51.90V330.4H51.00V330.7H50.10V334.4H49.20V329.3H48.30V325.9H47.40V329.6H46.50V324.2H45.60V324.3H44.70V325.8H43.80V321.6H42.90V326.0H42.00V324.6H41.10V324.5H40.20V327.6H39.30V320.4H38.40V321.5H37.50V322.4H36.60V325.8H35.70V322.8H34.80V316.1H33.90V316.0H33.00V323.0H32.10V323.2H31.20V326.6H30.30V322.3H29.40V325.9H28.50V333.1H27.60V329.5H26.70V330.0H25.80V321.1H24.90V323.2H24.00V326.0H23.10V319.3H22.20V320.3H21.30V327.8H20.40V323.6H19.50V327.1H18.60V323.0H17.70V333.1H16.80V330.2H15.90V330.1H15.00V316.9H14.10V318.4H13.20V319.6H12.30V328.3H11.40V324.7H10.50V326.5H9.60V327.2H8.70V331.5H7.80V323.3H6.90V326.6H6.00V326.0H5.10V335.3H4.20Z" fill="#20475f"/>
</g>
<rect x="4.2" y="223.1" width="568.3" height="1.6" fill="#c9c5bd"/>
<path d="M286.7 69.9H291.8L286.7 74.6Z" fill="#f8ee10"/>
<path d="M337.9 69.9H332.8L337.9 74.6Z" fill="#f8ee10"/>
<path d="M286.7 377.8H291.8L286.7 373.1Z" fill="#f8ee10"/>
<path d="M337.9 377.8H332.8L337.9 373.1Z" fill="#f8ee10"/>
<path d="M36.8 70.5V377.5" stroke="#f4efe8" stroke-opacity="0.9" stroke-width="1.3" stroke-dasharray="1.1 1.25"/>
<rect x="572.5" y="62.9" width="24.2" height="315" fill="#fff"/>
<text x="579" y="70" font-size="7.2" fill="#222" textLength="8.4" lengthAdjust="spacingAndGlyphs">dB</text>
<text x="581.2" y="88.3" font-size="7.2" fill="#222" stroke="#222" stroke-width="0.15" textLength="5.2" lengthAdjust="spacingAndGlyphs">-1</text>
<text x="581.2" y="98.9" font-size="7.2" fill="#222" stroke="#222" stroke-width="0.15" textLength="5.2" lengthAdjust="spacingAndGlyphs">-2</text>
<text x="581.2" y="109.5" font-size="7.2" fill="#222" stroke="#222" stroke-width="0.15" textLength="5.2" lengthAdjust="spacingAndGlyphs">-4</text>
<text x="581.2" y="120.1" font-size="7.2" fill="#222" stroke="#222" stroke-width="0.15" textLength="5.2" lengthAdjust="spacingAndGlyphs">-7</text>
<text x="580.2" y="130.7" font-size="7.2" fill="#222" stroke="#222" stroke-width="0.15" textLength="8.8" lengthAdjust="spacingAndGlyphs">-10</text>
<text x="580.2" y="141.3" font-size="7.2" fill="#222" stroke="#222" stroke-width="0.15" textLength="8.8" lengthAdjust="spacingAndGlyphs">-16</text>
<text x="580.2" y="151.9" font-size="7.2" fill="#222" stroke="#222" stroke-width="0.15" textLength="8.8" lengthAdjust="spacingAndGlyphs">-90</text>
<text x="580.2" y="162.5" font-size="7.2" fill="#222" stroke="#222" stroke-width="0.15" textLength="8.8" lengthAdjust="spacingAndGlyphs">-16</text>
<text x="580.2" y="173.1" font-size="7.2" fill="#222" stroke="#222" stroke-width="0.15" textLength="8.8" lengthAdjust="spacingAndGlyphs">-10</text>
<text x="581.2" y="183.7" font-size="7.2" fill="#222" stroke="#222" stroke-width="0.15" textLength="5.2" lengthAdjust="spacingAndGlyphs">-7</text>
<text x="581.2" y="194.3" font-size="7.2" fill="#222" stroke="#222" stroke-width="0.15" textLength="5.2" lengthAdjust="spacingAndGlyphs">-4</text>
<text x="581.2" y="204.9" font-size="7.2" fill="#222" stroke="#222" stroke-width="0.15" textLength="5.2" lengthAdjust="spacingAndGlyphs">-2</text>
<text x="581.2" y="215.5" font-size="7.2" fill="#222" stroke="#222" stroke-width="0.15" textLength="5.2" lengthAdjust="spacingAndGlyphs">-1</text>
<text x="581.2" y="239.0" font-size="7.2" fill="#222" stroke="#222" stroke-width="0.15" textLength="5.2" lengthAdjust="spacingAndGlyphs">-1</text>
<text x="581.2" y="249.6" font-size="7.2" fill="#222" stroke="#222" stroke-width="0.15" textLength="5.2" lengthAdjust="spacingAndGlyphs">-2</text>
<text x="581.2" y="260.2" font-size="7.2" fill="#222" stroke="#222" stroke-width="0.15" textLength="5.2" lengthAdjust="spacingAndGlyphs">-4</text>
<text x="581.2" y="270.8" font-size="7.2" fill="#222" stroke="#222" stroke-width="0.15" textLength="5.2" lengthAdjust="spacingAndGlyphs">-7</text>
<text x="580.2" y="281.4" font-size="7.2" fill="#222" stroke="#222" stroke-width="0.15" textLength="8.8" lengthAdjust="spacingAndGlyphs">-10</text>
<text x="580.2" y="292.0" font-size="7.2" fill="#222" stroke="#222" stroke-width="0.15" textLength="8.8" lengthAdjust="spacingAndGlyphs">-16</text>
<text x="580.2" y="302.6" font-size="7.2" fill="#222" stroke="#222" stroke-width="0.15" textLength="8.8" lengthAdjust="spacingAndGlyphs">-90</text>
<text x="580.2" y="313.2" font-size="7.2" fill="#222" stroke="#222" stroke-width="0.15" textLength="8.8" lengthAdjust="spacingAndGlyphs">-16</text>
<text x="580.2" y="323.8" font-size="7.2" fill="#222" stroke="#222" stroke-width="0.15" textLength="8.8" lengthAdjust="spacingAndGlyphs">-10</text>
<text x="581.2" y="334.4" font-size="7.2" fill="#222" stroke="#222" stroke-width="0.15" textLength="5.2" lengthAdjust="spacingAndGlyphs">-7</text>
<text x="581.2" y="345.0" font-size="7.2" fill="#222" stroke="#222" stroke-width="0.15" textLength="5.2" lengthAdjust="spacingAndGlyphs">-4</text>
<text x="581.2" y="355.6" font-size="7.2" fill="#222" stroke="#222" stroke-width="0.15" textLength="5.2" lengthAdjust="spacingAndGlyphs">-2</text>
<text x="581.2" y="366.2" font-size="7.2" fill="#222" stroke="#222" stroke-width="0.15" textLength="5.2" lengthAdjust="spacingAndGlyphs">-1</text>
<path d="M572.8 75.0H577.6M572.8 85.6H577.6M572.8 96.2H577.6M572.8 106.8H577.6M572.8 117.4H577.6M572.8 128.0H577.6M572.8 138.6H577.6M572.8 149.2H577.6M572.8 159.8H577.6M572.8 170.4H577.6M572.8 181.0H577.6M572.8 191.6H577.6M572.8 202.2H577.6M572.8 212.8H577.6M572.8 80.3H575.2M572.8 90.9H575.2M572.8 101.5H575.2M572.8 112.1H575.2M572.8 122.7H575.2M572.8 133.3H575.2M572.8 143.9H575.2M572.8 154.5H575.2M572.8 165.1H575.2M572.8 175.7H575.2M572.8 186.3H575.2M572.8 196.9H575.2M572.8 207.5H575.2M572.8 225.7H577.6M572.8 236.3H577.6M572.8 246.9H577.6M572.8 257.5H577.6M572.8 268.1H577.6M572.8 278.7H577.6M572.8 289.3H577.6M572.8 299.9H577.6M572.8 310.5H577.6M572.8 321.1H577.6M572.8 331.7H577.6M572.8 342.3H577.6M572.8 352.9H577.6M572.8 363.5H577.6M572.8 231.0H575.2M572.8 241.6H575.2M572.8 252.2H575.2M572.8 262.8H575.2M572.8 273.4H575.2M572.8 284.0H575.2M572.8 294.6H575.2M572.8 305.2H575.2M572.8 315.8H575.2M572.8 326.4H575.2M572.8 337.0H575.2M572.8 347.6H575.2M572.8 358.2H575.2M572.8 218.1H575.2M572.8 368.8H575.2M572.8 374.1H577.6" stroke="#777" stroke-width="0.9" fill="none"/>
<rect x="572.5" y="223.2" width="24" height="1.4" fill="#c4c4c4"/>
<rect x="3.6" y="377.7" width="593.1" height="16.4" fill="#fff"/>
<rect x="3.6" y="393.7" width="593.1" height="1.1" fill="#a6a6a6"/>
<path d="M3.6 379.4V380.9M11.4 379.4V380.9M19.3 379.4V380.9M27.1 379.4V380.9M35.0 379.4V380.9M42.8 379.4V380.9M50.6 379.4V380.9M58.5 379.4V380.9M66.3 379.4V380.9M74.2 379.4V380.9M82.0 378V383.4M89.8 379.4V380.9M97.7 379.4V380.9M105.5 379.4V380.9M113.4 379.4V380.9M121.2 379.4V380.9M129.0 379.4V380.9M136.9 379.4V380.9M144.7 379.4V380.9M152.6 379.4V380.9M160.4 378V383.4M168.2 379.4V380.9M176.1 379.4V380.9M183.9 379.4V380.9M191.8 379.4V380.9M199.6 379.4V380.9M207.4 379.4V380.9M215.3 379.4V380.9M223.1 379.4V380.9M231.0 379.4V380.9M238.8 378V383.4M246.6 379.4V380.9M254.5 379.4V380.9M262.3 379.4V380.9M270.2 379.4V380.9M278.0 379.4V380.9M285.8 379.4V380.9M293.7 379.4V380.9M301.5 379.4V380.9M309.4 379.4V380.9M317.2 378V383.4M325.0 379.4V380.9M332.9 379.4V380.9M340.7 379.4V380.9M348.6 379.4V380.9M356.4 379.4V380.9M364.2 379.4V380.9M372.1 379.4V380.9M379.9 379.4V380.9M387.8 379.4V380.9M395.6 378V383.4M403.4 379.4V380.9M411.3 379.4V380.9M419.1 379.4V380.9M427.0 379.4V380.9M434.8 379.4V380.9M442.6 379.4V380.9M450.5 379.4V380.9M458.3 379.4V380.9M466.2 379.4V380.9M474.0 378V383.4M481.8 379.4V380.9M489.7 379.4V380.9M497.5 379.4V380.9M505.4 379.4V380.9M513.2 379.4V380.9M521.0 379.4V380.9M528.9 379.4V380.9M536.7 379.4V380.9M544.6 379.4V380.9M552.4 378V383.4M560.2 379.4V380.9M568.1 379.4V380.9" stroke="#333" stroke-width="0.9" fill="none"/>
<path d="M4.2 378V382" stroke="#333" stroke-width="0.9"/>
<text x="4.4" y="391.2" font-size="7" fill="#222" textLength="11.4" lengthAdjust="spacingAndGlyphs">hms</text>
<text x="72.9" y="391.2" font-size="7" fill="#222" stroke="#222" stroke-width="0.15" textLength="18.2" lengthAdjust="spacingAndGlyphs">0:25.0</text>
<text x="151.3" y="391.2" font-size="7" fill="#222" stroke="#222" stroke-width="0.15" textLength="18.2" lengthAdjust="spacingAndGlyphs">0:50.0</text>
<text x="229.7" y="391.2" font-size="7" fill="#222" stroke="#222" stroke-width="0.15" textLength="18.2" lengthAdjust="spacingAndGlyphs">1:15.0</text>
<text x="308.1" y="391.2" font-size="7" fill="#222" stroke="#222" stroke-width="0.15" textLength="18.2" lengthAdjust="spacingAndGlyphs">1:40.0</text>
<text x="386.5" y="391.2" font-size="7" fill="#222" stroke="#222" stroke-width="0.15" textLength="18.2" lengthAdjust="spacingAndGlyphs">2:05.0</text>
<text x="464.9" y="391.2" font-size="7" fill="#222" stroke="#222" stroke-width="0.15" textLength="18.2" lengthAdjust="spacingAndGlyphs">2:30.0</text>
<text x="543.3" y="391.2" font-size="7" fill="#222" stroke="#222" stroke-width="0.15" textLength="18.2" lengthAdjust="spacingAndGlyphs">2:55.0</text>
<rect x="3.6" y="394.9" width="593.1" height="50" fill="#f0f0f0"/>
<circle cx="19.4" cy="414.6" r="9.7" fill="#dfe9f2" opacity="0.7"/><circle cx="19.4" cy="414.4" r="8.9" fill="url(#btng)" stroke="#68a4d8" stroke-width="1.2"/><circle cx="19.4" cy="414.4" r="7.7" fill="none" stroke="#eef7fd" stroke-width="0.8"/><path d="M17.3 410.7V418.3L22.8 414.5Z" fill="#5ba6e0" stroke="#4a93d2" stroke-width="0.4" stroke-linejoin="round"/>
<circle cx="43.3" cy="414.6" r="9.7" fill="#dfe9f2" opacity="0.7"/><circle cx="43.3" cy="414.4" r="8.9" fill="url(#btng)" stroke="#68a4d8" stroke-width="1.2"/><circle cx="43.3" cy="414.4" r="7.7" fill="none" stroke="#eef7fd" stroke-width="0.8"/><rect x="39.5" y="411.4" width="2.4" height="6.8" fill="#5ba6e0" stroke="#4a93d2" stroke-width="0.4"/><rect x="44.4" y="411.4" width="2.6" height="6.8" fill="#5ba6e0" stroke="#4a93d2" stroke-width="0.4"/>
<circle cx="67.1" cy="414.6" r="9.7" fill="#dfe9f2" opacity="0.7"/><circle cx="67.1" cy="414.4" r="8.9" fill="url(#btng)" stroke="#68a4d8" stroke-width="1.2"/><circle cx="67.1" cy="414.4" r="7.7" fill="none" stroke="#eef7fd" stroke-width="0.8"/><rect x="63.6" y="411.4" width="7.2" height="6.3" fill="#5ba6e0" stroke="#4a93d2" stroke-width="0.4"/><rect x="64.1" y="412.2" width="6.2" height="1.3" fill="#a6d2f3"/>
<circle cx="91.8" cy="414.4" r="8.9" fill="#eeeeee" stroke="#cdcdcd" stroke-width="1.2"/><circle cx="91.8" cy="414.4" r="7.7" fill="none" stroke="#f9f9f9" stroke-width="0.9"/>
<circle cx="91.8" cy="414.4" r="3.8" fill="#bfbfbf" stroke="#ababab" stroke-width="0.6"/>
<rect x="105" y="403.8" width="0.9" height="21.6" fill="#c6c6c6"/>
<path d="M108.8 413.2H113.4L111.1 416Z" fill="#a4a4a4"/>
<text x="184.9 199.8 215.4 224.4 239.3 254.9 263.8 278.7 293.6 301.9 316.8 331.7" y="427" font-size="29.8" fill="#0c0c0c" stroke="#0c0c0c" stroke-width="0.5">00:00:10.539</text>
<text x="415.8" y="420.0" font-size="7.3" fill="#1a1a1a" textLength="24.4" lengthAdjust="spacingAndGlyphs">Selection</text>
<text x="445.8" y="410.2" font-size="7.3" fill="#1a1a1a" textLength="13.4" lengthAdjust="spacingAndGlyphs">Start</text>
<text x="495.2" y="410.2" font-size="7.3" fill="#1a1a1a" textLength="10.6" lengthAdjust="spacingAndGlyphs">End</text>
<text x="544.7" y="410.2" font-size="7.3" fill="#1a1a1a" textLength="19.0" lengthAdjust="spacingAndGlyphs">Length</text>
<rect x="445.2" y="412.6" width="48.2" height="12.6" fill="#fff" stroke="#a4a4a4" stroke-width="0.9"/>
<text x="448.0" y="421.4" font-size="7.3" fill="#222" textLength="42.4" lengthAdjust="spacingAndGlyphs">00:01:30.359</text>
<rect x="495.4" y="412.6" width="48.0" height="12.6" fill="#fff" stroke="#a4a4a4" stroke-width="0.9"/>
<text x="498.2" y="421.4" font-size="7.3" fill="#222" textLength="42.4" lengthAdjust="spacingAndGlyphs">00:01:46.372</text>
<rect x="545.2" y="412.6" width="47.6" height="12.6" fill="#fff" stroke="#a4a4a4" stroke-width="0.9"/>
<text x="548.0" y="421.4" font-size="7.3" fill="#222" textLength="42.4" lengthAdjust="spacingAndGlyphs">00:00:16.013</text>
<rect x="2.8" y="14.6" width="0.9" height="431" fill="#fdfdfd"/>
<rect x="596.4" y="14.6" width="0.9" height="431" fill="#fdfdfd"/>
<rect x="3.1" y="444.8" width="594" height="0.9" fill="#fdfdfd"/>
<path d="M0 14.6V449H600V14.6H597.2V445.7H2.8V14.6Z" fill="#3c3f55"/>
<rect x="0" y="12" width="0.8" height="437" fill="#9196b5"/><rect x="599.2" y="12" width="0.8" height="437" fill="#7d819c"/>
<rect x="0" y="1.5" width="1.4" height="12" fill="#9297b8" opacity="0.85"/><rect x="1.4" y="1.5" width="1" height="12" fill="#8287a8" opacity="0.45"/>
<rect x="598.6" y="1.5" width="1.4" height="12" fill="#8287a8" opacity="0.7"/>
<rect x="0" y="447.4" width="600" height="1.6" fill="#7d82a1"/>
</svg></body></html>
